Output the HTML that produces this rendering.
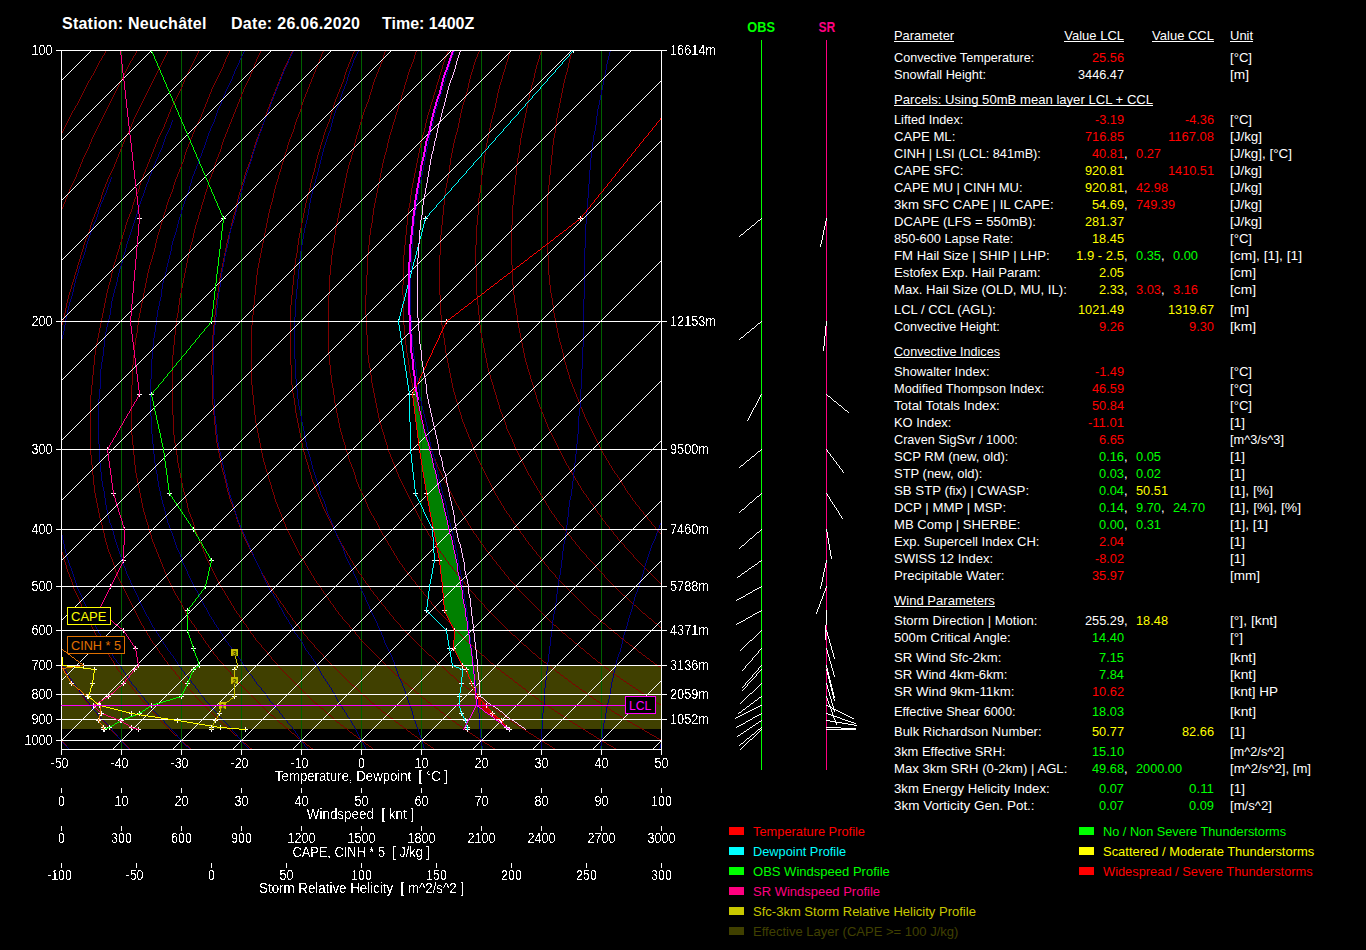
<!DOCTYPE html>
<html lang="en"><head><meta charset="utf-8"><title>Sounding Neuchâtel 26.06.2020 1400Z</title>
<style>
html,body{margin:0;padding:0;background:#000;overflow:hidden}
svg{display:block;font-family:"Liberation Sans",sans-serif;font-size:13px;fill:#fff}
svg text{white-space:pre}
svg text.al{filter:url(#al)}
svg line,svg polyline,svg rect,svg polygon,svg path{shape-rendering:crispEdges}
</style></head><body>
<svg width="1366" height="950" viewBox="0 0 1366 950">
<rect width="1366" height="950" fill="#000"/>
<filter id="al" x="-5%" y="-20%" width="110%" height="140%" color-interpolation-filters="sRGB"><feComponentTransfer><feFuncA type="discrete" tableValues="0 0 0 0 0 0 0 0 0 0 0 1 1 1 1 1 1 1 1 1"/></feComponentTransfer></filter>
<clipPath id="c"><rect x="61" y="50" width="601" height="700"/></clipPath>
<g clip-path="url(#c)">
<rect x="61" y="666" width="600" height="63" fill="#404000"/>
<polygon points="415.3,387.5 413.9,390.5 412.5,393.5 412.3,396.5 412.7,399.5 413.1,402.5 413.6,405.5 414.0,408.5 414.4,411.5 414.8,414.5 415.3,417.5 415.7,420.5 416.1,423.5 416.5,426.5 417.0,429.5 417.4,432.5 417.8,435.5 418.2,438.5 418.7,441.5 419.1,444.5 419.5,447.5 419.9,450.5 420.4,453.5 420.8,456.5 421.3,459.5 421.7,462.5 422.1,465.5 422.6,468.5 423.0,471.5 423.4,474.5 423.9,477.5 424.3,480.5 424.7,483.5 425.2,486.5 425.6,489.5 426.1,492.5 426.6,495.5 427.3,498.5 427.9,501.5 428.6,504.5 429.2,507.5 429.8,510.5 430.5,513.5 431.1,516.5 431.8,519.5 432.4,522.5 433.0,525.5 433.7,528.5 434.3,531.5 434.9,534.5 435.4,537.5 436.0,540.5 436.6,543.5 437.1,546.5 437.7,549.5 438.3,552.5 438.8,555.5 439.4,558.5 439.9,561.5 440.2,564.5 440.5,567.5 440.8,570.5 441.1,573.5 441.4,576.5 441.7,579.5 442.0,582.5 442.3,585.5 442.6,588.5 442.8,591.5 443.1,594.5 443.4,597.5 443.7,600.5 443.9,603.5 444.2,606.5 444.5,609.5 445.7,612.5 447.2,615.5 448.6,618.5 450.1,621.5 451.5,624.5 453.0,627.5 454.4,630.5 454.3,633.5 454.1,636.5 454.0,639.5 453.9,642.5 453.7,645.5 453.6,648.5 455.1,651.5 456.6,654.5 458.1,657.5 459.6,660.5 461.1,663.5 463.3,666.5 466.8,669.5 467.8,672.5 468.8,675.5 469.8,678.5 470.8,681.5 471.9,684.5 473.3,687.5 474.2,689.5 475.2,689.5 475.1,687.5 474.8,684.5 474.6,681.5 474.3,678.5 474.1,675.5 473.8,672.5 473.6,669.5 473.3,666.5 473.0,663.5 472.6,660.5 472.2,657.5 471.7,654.5 471.3,651.5 470.9,648.5 470.4,645.5 470.0,642.5 469.6,639.5 469.1,636.5 468.6,633.5 468.2,630.5 467.7,627.5 467.3,624.5 466.8,621.5 466.4,618.5 465.9,615.5 465.4,612.5 465.0,609.5 464.5,606.5 464.0,603.5 463.4,600.5 462.9,597.5 462.4,594.5 461.9,591.5 461.3,588.5 460.8,585.5 460.2,582.5 459.7,579.5 459.1,576.5 458.6,573.5 458.0,570.5 457.4,567.5 456.8,564.5 456.2,561.5 455.6,558.5 455.0,555.5 454.3,552.5 453.7,549.5 453.0,546.5 452.4,543.5 451.7,540.5 451.0,537.5 450.4,534.5 449.7,531.5 449.0,528.5 448.2,525.5 447.5,522.5 446.8,519.5 446.1,516.5 445.3,513.5 444.6,510.5 443.8,507.5 443.1,504.5 442.3,501.5 441.6,498.5 440.8,495.5 440.0,492.5 439.3,489.5 438.6,486.5 437.9,483.5 437.1,480.5 436.4,477.5 435.7,474.5 435.0,471.5 434.2,468.5 433.5,465.5 432.8,462.5 432.1,459.5 431.4,456.5 430.7,453.5 430.0,450.5 429.2,447.5 428.3,444.5 427.4,441.5 426.6,438.5 425.7,435.5 424.9,432.5 424.1,429.5 423.2,426.5 422.4,423.5 421.6,420.5 421.0,417.5 420.4,414.5 419.8,411.5 419.2,408.5 418.6,405.5 418.1,402.5 417.5,399.5 417.0,396.5 416.5,393.5 415.9,390.5 415.5,387.5" fill="#008000"/>
<polygon points="475.4,692.5 475.6,694.5 475.8,696.5 476.0,698.5 476.3,700.5 476.5,702.5 476.7,704.5 478.1,706.5 480.6,708.5 483.2,710.5 485.9,712.5 488.5,714.5 491.2,716.5 493.9,718.5 496.6,720.5 499.3,722.5 502.1,724.5 504.9,726.5 509.2,729.5 509.2,729.5 509.6,729.5 509.6,729.5 505.3,726.5 503.9,724.5 502.5,722.5 501.1,720.5 498.7,718.5 496.2,716.5 493.8,714.5 491.8,712.5 490.2,710.5 488.5,708.5 486.9,706.5 485.1,704.5 483.2,702.5 481.2,700.5 479.3,698.5 477.3,696.5 476.4,694.5 475.5,692.5" fill="#c00000"/>
<rect x="121" y="50" width="1" height="700" fill="#006000"/>
<rect x="181" y="50" width="1" height="700" fill="#006000"/>
<rect x="241" y="50" width="1" height="700" fill="#006000"/>
<rect x="301" y="50" width="1" height="700" fill="#006000"/>
<rect x="361" y="50" width="1" height="700" fill="#006000"/>
<rect x="421" y="50" width="1" height="700" fill="#006000"/>
<rect x="481" y="50" width="1" height="700" fill="#006000"/>
<rect x="541" y="50" width="1" height="700" fill="#006000"/>
<rect x="601" y="50" width="1" height="700" fill="#006000"/>
<path d="M69 749.5h1m-2-1h1m-2-1h1m-1.5-2.5v2m-1.5-2.5h1m-2-1h1m-2-1h1m-2-1h1m-2-1h1m-0.5-607.5v2m1-4v2m1-4v2m1-4v2m1-4v2m1-4v2m1-4v2m1-4v2m1-4v2m1-4v2m1-4v2m1-4v2m0.5-2.5h1m0.5-2.5v2m1-4v2m0.5-2.5h1m0.5-2.5v2m1-4v2m1-4v2m1-4v2m1-4v2m1-4v2m1-4v2m1-4v2m1-4v2m1-4v2m1-4v2m1-4v2m0.5-2.5h1m0.5-2.5v2m1-4v2m0.5-2.5h1m0.5-2.5v2m1-4v2m1-4v2m1-4v2m1-4v2m1-4v2m1-4v2m0.5-2.5h1m0.5-2.5v2m1-4v2m0.5-2.5h1m0.5-2.5v2m1-4v2m0.5-2.5h1" stroke="#800000" fill="none"/>
<path d="M130 749.5h1m-2-1h1m-2-1h1m-2-1h1m-2-1h1m-2-1h1m-2-1h1m-2-1h1m-2-1h1m-2-1h1m-2-1h1m-2-1h1m-2-1h1m-2-1h1m-2-1h1m-2-1h1m-2-1h1m-2-1h1m-2-1h1m-2-1h1m-2-1h1m-2-1h1m-2-1h1m-1.5-2.5v2m-1.5-2.5h1m-2-1h1m-2-1h1m-2-1h1m-2-1h1m-2-1h1m-1.5-2.5v2m-1.5-2.5h1m-2-1h1m-2-1h1m-1.5-2.5v2m-1.5-2.5h1m-2-1h1m-2-1h1m-2-1h1m-2-1h1m-1.5-2.5v2m-1.5-2.5h1m-2-1h1m-2-1h1m-2-1h1m-2-1h1m-1.5-2.5v2m-1.5-2.5h1m-1.5-2.5v2m-1.5-2.5h1m-2-1h1m-1.5-2.5v2m-1.5-2.5h1m-1.5-2.5v2m-1.5-2.5h1m-1.5-2.5v2m-1.5-2.5h1m-2-1h1m-1.5-2.5v2m-1.5-2.5h1m-1.5-2.5v2m-1.5-2.5h1m-1.5-2.5v2m-1.5-2.5h1m-2-1h1m-1.5-2.5v2m-1.5-2.5h1m-1.5-2.5v2m-1-4v2m-1.5-2.5h1m-0.5-456.5v3m1-5v2m1-5v3m1-5v2m1-5v3m1-5v2m1-5v3m1-5v2m1-5v3m1-5v2m1-4v2m1-4v2m1-4v2m1-4v2m1-4v2m1-5v3m1-5v2m1-5v3m1-5v2m1-5v3m1-5v2m1-5v3m1-5v2m1-4v2m1-4v2m1-4v2m1-4v2m1-4v2m1-5v3m1-5v2m1-5v3m1-5v2m1-4v2m1-4v2m1-4v2m1-4v2m1-4v2m1-4v2m1-4v2m1-4v2m1-4v2m1-4v2m1-4v2m1-4v2m1-4v2m1-4v2m1-4v2m1-4v2m1-4v2m1-4v2m1-4v2m1-4v2m1-4v2m1-4v2m1-4v2m1-4v2m1-4v2m1-4v2m1-4v2m1-4v2m1-4v2m1-4v2m1-4v2m1-4v2m1-4v2m1-4v2m1-4v2m1-4v2m1-4v2m1-4v2m0.5-2.5h1m0.5-2.5v2m1-4v2m0.5-2.5h1m0.5-2.5v2m1-4v2m0.5-2.5h1" stroke="#800000" fill="none"/>
<path d="M191 749.5h1m-2-1h1m-2-1h1m-2-1h1m-3-1h2m-3-1h1m-2-1h1m-2-1h1m-2-1h1m-2-1h1m-2-1h1m-2-1h1m-2-1h1m-2-1h1m-3-1h2m-3-1h1m-2-1h1m-2-1h1m-2-1h1m-2-1h1m-2-1h1m-2-1h1m-2-1h1m-2-1h1m-2-1h1m-2-1h1m-2-1h1m-2-1h1m-2-1h1m-2-1h1m-2-1h1m-2-1h1m-2-1h1m-1.5-2.5v2m-1.5-2.5h1m-2-1h1m-2-1h1m-2-1h1m-2-1h1m-2-1h1m-2-1h1m-2-1h1m-1.5-2.5v2m-1.5-2.5h1m-2-1h1m-2-1h1m-2-1h1m-2-1h1m-2-1h1m-1.5-2.5v2m-1.5-2.5h1m-2-1h1m-2-1h1m-1.5-2.5v2m-1.5-2.5h1m-2-1h1m-2-1h1m-1.5-2.5v2m-1.5-2.5h1m-2-1h1m-2-1h1m-1.5-2.5v2m-1.5-2.5h1m-2-1h1m-2-1h1m-1.5-2.5v2m-1.5-2.5h1m-2-1h1m-2-1h1m-1.5-2.5v2m-1.5-2.5h1m-2-1h1m-1.5-2.5v2m-1-4v2m-1.5-2.5h1m-1.5-2.5v2m-1-4v2m-1.5-2.5h1m-1.5-2.5v2m-1.5-2.5h1m-1.5-2.5v2m-1.5-2.5h1m-2-1h1m-1.5-2.5v2m-1.5-2.5h1m-1.5-2.5v2m-1-4v2m-1.5-2.5h1m-1.5-2.5v2m-1-4v2m-1.5-2.5h1m-1.5-2.5v2m-1-4v2m-1.5-2.5h1m-1.5-2.5v2m-1-4v2m-1-4v2m-1-4v2m-1-4v2m-1-4v2m-1-4v2m-1-4v2m-1-4v2m-1-4v2m-1-4v2m-1-4v2m-1-4v2m-1-4v2m-1-5v3m-1-5v2m-1-5v3m-1-5v2m-1-4v2m-1-4v2m-1-4v2m-1-4v2m-1-6v4m-1-7v3m-1-6v3m-1-5v2m-1-5v3m-1-5v2m-1-5v3m-1-7v4m-1-7v3m-1-6v3m-1-7v4m-1-7v3m-1-7v4m0-227v4m1-7v3m1-7v4m1-9v5m1-10v5m1-10v5m1-9v4m1-8v4m1-7v3m1-6v3m1-7v4m1-7v3m1-6v3m1-7v4m1-7v3m1-6v3m1-7v4m1-7v3m1-6v3m1-7v4m1-7v3m1-6v3m1-7v4m1-7v3m1-6v3m1-5v2m1-5v3m1-5v2m1-5v3m1-7v4m1-7v3m1-6v3m1-5v2m1-5v3m1-5v2m1-5v3m1-5v2m1-5v3m1-5v2m1-5v3m1-7v4m1-7v3m1-6v3m1-5v2m1-5v3m1-5v2m1-5v3m1-5v2m1-4v2m1-4v2m1-4v2m1-4v2m1-4v2m1-5v3m1-5v2m1-5v3m1-5v2m1-5v3m1-5v2m1-5v3m1-5v2m1-5v3m1-5v2m1-5v3m1-5v2m1-4v2m1-4v2m1-4v2m1-4v2m1-4v2m1-5v3m1-5v2m1-5v3m1-5v2m1-4v2m1-4v2m1-4v2m1-4v2m1-4v2m1-4v2m1-4v2m1-4v2m1-4v2m1-4v2m1-4v2m1-4v2m1-4v2m1-4v2m1-4v2m1-4v2m1-4v2m1-4v2m1-4v2m1-4v2m1-4v2m1-4v2m1-4v2m1-4v2m1-4v2m1-4v2m1-4v2m1-4v2m1-4v2m1-4v2m1-4v2m1-4v2m1-4v2m0.5-2.5h1" stroke="#800000" fill="none"/>
<path d="M252 749.5h1m-3-1h2m-3-1h1m-2-1h1m-2-1h1m-2-1h1m-3-1h2m-3-1h1m-2-1h1m-2-1h1m-2-1h1m-2-1h1m-2-1h1m-2-1h1m-3-1h2m-3-1h1m-2-1h1m-2-1h1m-2-1h1m-2-1h1m-2-1h1m-2-1h1m-2-1h1m-2-1h1m-3-1h2m-3-1h1m-2-1h1m-2-1h1m-2-1h1m-2-1h1m-2-1h1m-2-1h1m-2-1h1m-2-1h1m-2-1h1m-2-1h1m-2-1h1m-2-1h1m-2-1h1m-2-1h1m-2-1h1m-2-1h1m-2-1h1m-2-1h1m-2-1h1m-2-1h1m-2-1h1m-2-1h1m-2-1h1m-2-1h1m-2-1h1m-2-1h1m-2-1h1m-1.5-2.5v2m-1.5-2.5h1m-2-1h1m-2-1h1m-2-1h1m-2-1h1m-2-1h1m-2-1h1m-2-1h1m-1.5-2.5v2m-1.5-2.5h1m-2-1h1m-2-1h1m-2-1h1m-2-1h1m-2-1h1m-1.5-2.5v2m-1.5-2.5h1m-2-1h1m-2-1h1m-1.5-2.5v2m-1.5-2.5h1m-2-1h1m-2-1h1m-1.5-2.5v2m-1.5-2.5h1m-2-1h1m-2-1h1m-1.5-2.5v2m-1.5-2.5h1m-2-1h1m-1.5-2.5v2m-1.5-2.5h1m-1.5-2.5v2m-1.5-2.5h1m-2-1h1m-1.5-2.5v2m-1.5-2.5h1m-1.5-2.5v2m-1.5-2.5h1m-1.5-2.5v2m-1.5-2.5h1m-2-1h1m-1.5-2.5v2m-1.5-2.5h1m-1.5-2.5v2m-1-4v2m-1.5-2.5h1m-1.5-2.5v2m-1-4v2m-1.5-2.5h1m-1.5-2.5v2m-1-4v2m-1.5-2.5h1m-1.5-2.5v2m-1-4v2m-1-4v2m-1-4v2m-1-4v2m-1-4v2m-1-4v2m-1-4v2m-1-4v2m-1-4v2m-1-4v2m-1-4v2m-1-4v2m-1-4v2m-1-4v2m-1-4v2m-1-4v2m-1-4v2m-1-4v2m-1-4v2m-1-4v2m-1-4v2m-1-4v2m-1-4v2m-1-5v3m-1-5v2m-1-5v3m-1-7v4m-1-7v3m-1-6v3m-1-5v2m-1-5v3m-1-5v2m-1-5v3m-1-7v4m-1-7v3m-1-7v4m-1-9v5m-1-9v4m-1-8v4m-1-7v3m-1-7v4m-1-9v5m-1-10v5m-1-10v5m-1-10v5m-1-10v5m-1-13v8m-1-18v10m-1-20v10m-1-20v10m-1-70v60m1-70v10m1-20v10m1-20v10m1-20v10m1-17v7m1-12v5m1-10v5m1-10v5m1-10v5m1-10v5m1-10v5m1-10v5m1-10v5m1-10v5m1-10v5m1-10v5m1-9v4m1-8v4m1-7v3m1-7v4m1-9v5m1-9v4m1-8v4m1-7v3m1-6v3m1-7v4m1-7v3m1-6v3m1-7v4m1-7v3m1-6v3m1-7v4m1-7v3m1-6v3m1-7v4m1-7v3m1-6v3m1-5v2m1-5v3m1-5v2m1-5v3m1-7v4m1-7v3m1-6v3m1-5v2m1-5v3m1-5v2m1-5v3m1-7v4m1-7v3m1-6v3m1-5v2m1-5v3m1-5v2m1-5v3m1-5v2m1-5v3m1-5v2m1-5v3m1-5v2m1-5v3m1-5v2m1-5v3m1-5v2m1-5v3m1-5v2m1-5v3m1-5v2m1-4v2m1-4v2m1-4v2m1-4v2m1-4v2m1-5v3m1-5v2m1-5v3m1-5v2m1-5v3m1-5v2m1-5v3m1-5v2m1-4v2m1-4v2m1-4v2m1-4v2m1-4v2m1-4v2m1-4v2m1-4v2m1-4v2m1-4v2m1-5v3m1-5v2m1-5v3m1-5v2m1-4v2m1-4v2m1-4v2m1-4v2m1-4v2m1-4v2m1-4v2m1-4v2m1-4v2m1-4v2m1-4v2m1-4v2m1-4v2m0.5-2.5h1" stroke="#800000" fill="none"/>
<path d="M313 749.5h1m-3-1h2m-3-1h1m-2-1h1m-3-1h2m-3-1h1m-2-1h1m-3-1h2m-3-1h1m-2-1h1m-2-1h1m-3-1h2m-3-1h1m-2-1h1m-2-1h1m-2-1h1m-3-1h2m-3-1h1m-2-1h1m-2-1h1m-2-1h1m-3-1h2m-3-1h1m-2-1h1m-2-1h1m-2-1h1m-3-1h2m-3-1h1m-2-1h1m-2-1h1m-2-1h1m-2-1h1m-2-1h1m-2-1h1m-3-1h2m-3-1h1m-2-1h1m-2-1h1m-2-1h1m-2-1h1m-2-1h1m-2-1h1m-2-1h1m-2-1h1m-2-1h1m-2-1h1m-2-1h1m-2-1h1m-2-1h1m-2-1h1m-2-1h1m-2-1h1m-2-1h1m-2-1h1m-2-1h1m-2-1h1m-2-1h1m-2-1h1m-2-1h1m-2-1h1m-2-1h1m-2-1h1m-2-1h1m-2-1h1m-2-1h1m-2-1h1m-2-1h1m-2-1h1m-2-1h1m-2-1h1m-2-1h1m-1.5-2.5v2m-1.5-2.5h1m-2-1h1m-2-1h1m-1.5-2.5v2m-1.5-2.5h1m-2-1h1m-2-1h1m-2-1h1m-2-1h1m-1.5-2.5v2m-1.5-2.5h1m-2-1h1m-2-1h1m-2-1h1m-2-1h1m-2-1h1m-1.5-2.5v2m-1.5-2.5h1m-2-1h1m-2-1h1m-1.5-2.5v2m-1.5-2.5h1m-2-1h1m-1.5-2.5v2m-1.5-2.5h1m-1.5-2.5v2m-1.5-2.5h1m-2-1h1m-1.5-2.5v2m-1.5-2.5h1m-1.5-2.5v2m-1.5-2.5h1m-1.5-2.5v2m-1.5-2.5h1m-2-1h1m-1.5-2.5v2m-1.5-2.5h1m-1.5-2.5v2m-1.5-2.5h1m-1.5-2.5v2m-1.5-2.5h1m-2-1h1m-1.5-2.5v2m-1.5-2.5h1m-1.5-2.5v2m-1-4v2m-1.5-2.5h1m-1.5-2.5v2m-1-4v2m-1-4v2m-1-4v2m-1-4v2m-1-4v2m-1-4v2m-1.5-2.5h1m-1.5-2.5v2m-1-4v2m-1.5-2.5h1m-1.5-2.5v2m-1-4v2m-1-4v2m-1-4v2m-1-4v2m-1-4v2m-1-4v2m-1-4v2m-1-4v2m-1-5v3m-1-5v2m-1-5v3m-1-5v2m-1-5v3m-1-5v2m-1-5v3m-1-5v2m-1-5v3m-1-5v2m-1-5v3m-1-5v2m-1-5v3m-1-5v2m-1-5v3m-1-7v4m-1-7v3m-1-6v3m-1-7v4m-1-7v3m-1-6v3m-1-7v4m-1-7v3m-1-7v4m-1-9v5m-1-10v5m-1-10v5m-1-10v5m-1-10v5m-1-10v5m-1-10v5m-1-13v8m-1-18v10m-1-20v10m-1-20v10m-1-60v50m1-70v20m1-30v10m1-20v10m1-17v7m1-12v5m1-13v8m1-15v7m1-12v5m1-10v5m1-10v5m1-10v5m1-10v5m1-10v5m1-10v5m1-10v5m1-10v5m1-9v4m1-8v4m1-7v3m1-6v3m1-7v4m1-7v3m1-7v4m1-9v5m1-9v4m1-8v4m1-7v3m1-6v3m1-7v4m1-7v3m1-6v3m1-7v4m1-7v3m1-6v3m1-7v4m1-7v3m1-6v3m1-5v2m1-5v3m1-5v2m1-5v3m1-7v4m1-7v3m1-6v3m1-5v2m1-5v3m1-5v2m1-5v3m1-5v2m1-5v3m1-5v2m1-5v3m1-7v4m1-7v3m1-6v3m1-5v2m1-5v3m1-5v2m1-5v3m1-5v2m1-5v3m1-5v2m1-5v3m1-5v2m1-4v2m1-4v2m1-4v2m1-4v2m1-4v2m1-5v3m1-5v2m1-5v3m1-5v2m1-5v3m1-5v2m1-5v3m1-5v2m1-5v3m1-5v2m1-5v3m1-5v2m1-4v2m1-4v2m1-4v2m1-4v2m1-4v2m1-4v2m1-4v2m1-4v2m1-4v2m1-4v2m1-5v3m1-5v2m1-5v3m1-5v2m1-4v2m1-4v2m1-4v2m0.5-2.5h1" stroke="#800000" fill="none"/>
<path d="M373 749.5h2m-3-1h1m-2-1h1m-3-1h2m-3-1h1m-3-1h2m-3-1h1m-2-1h1m-3-1h2m-3-1h1m-2-1h1m-3-1h2m-3-1h1m-2-1h1m-3-1h2m-3-1h1m-2-1h1m-3-1h2m-3-1h1m-2-1h1m-2-1h1m-3-1h2m-3-1h1m-2-1h1m-3-1h2m-3-1h1m-2-1h1m-3-1h2m-3-1h1m-2-1h1m-2-1h1m-2-1h1m-2-1h1m-2-1h1m-3-1h2m-3-1h1m-2-1h1m-2-1h1m-2-1h1m-2-1h1m-2-1h1m-3-1h2m-3-1h1m-2-1h1m-2-1h1m-2-1h1m-3-1h2m-3-1h1m-2-1h1m-2-1h1m-2-1h1m-2-1h1m-2-1h1m-2-1h1m-2-1h1m-2-1h1m-2-1h1m-2-1h1m-2-1h1m-2-1h1m-2-1h1m-2-1h1m-2-1h1m-2-1h1m-2-1h1m-2-1h1m-2-1h1m-2-1h1m-2-1h1m-2-1h1m-2-1h1m-2-1h1m-2-1h1m-2-1h1m-2-1h1m-2-1h1m-2-1h1m-2-1h1m-2-1h1m-2-1h1m-2-1h1m-2-1h1m-2-1h1m-1.5-2.5v2m-1.5-2.5h1m-2-1h1m-2-1h1m-2-1h1m-2-1h1m-2-1h1m-1.5-2.5v2m-1.5-2.5h1m-2-1h1m-2-1h1m-1.5-2.5v2m-1.5-2.5h1m-2-1h1m-2-1h1m-2-1h1m-2-1h1m-1.5-2.5v2m-1.5-2.5h1m-2-1h1m-2-1h1m-2-1h1m-2-1h1m-1.5-2.5v2m-1.5-2.5h1m-1.5-2.5v2m-1.5-2.5h1m-2-1h1m-1.5-2.5v2m-1.5-2.5h1m-1.5-2.5v2m-1.5-2.5h1m-1.5-2.5v2m-1.5-2.5h1m-2-1h1m-1.5-2.5v2m-1.5-2.5h1m-1.5-2.5v2m-1.5-2.5h1m-1.5-2.5v2m-1.5-2.5h1m-2-1h1m-1.5-2.5v2m-1.5-2.5h1m-1.5-2.5v2m-1-4v2m-1.5-2.5h1m-1.5-2.5v2m-1-4v2m-1.5-2.5h1m-1.5-2.5v2m-1-4v2m-1.5-2.5h1m-1.5-2.5v2m-1-4v2m-1.5-2.5h1m-1.5-2.5v2m-1-4v2m-1.5-2.5h1m-1.5-2.5v2m-1-4v2m-1-4v2m-1-4v2m-1-4v2m-1-4v2m-1-4v2m-1-4v2m-1-4v2m-1-4v2m-1-4v2m-1-4v2m-1-4v2m-1-4v2m-1-5v3m-1-5v2m-1-5v3m-1-5v2m-1-5v3m-1-5v2m-1-5v3m-1-5v2m-1-5v3m-1-5v2m-1-5v3m-1-7v4m-1-7v3m-1-6v3m-1-5v2m-1-5v3m-1-5v2m-1-6v4m-1-9v5m-1-9v4m-1-8v4m-1-7v3m-1-7v4m-1-9v5m-1-10v5m-1-10v5m-1-10v5m-1-10v5m-1-13v8m-1-15v7m-1-12v5m-1-13v8m-1-28v20m-1-80v60m1-70v10m1-20v10m1-20v10m1-17v7m1-12v5m1-13v8m1-15v7m1-12v5m1-10v5m1-10v5m1-10v5m1-10v5m1-10v5m1-10v5m1-10v5m1-10v5m1-9v4m1-8v4m1-7v3m1-7v4m1-9v5m1-9v4m1-8v4m1-7v3m1-6v3m1-7v4m1-7v3m1-6v3m1-7v4m1-7v3m1-6v3m1-7v4m1-7v3m1-6v3m1-7v4m1-7v3m1-6v3m1-5v2m1-5v3m1-5v2m1-5v3m1-7v4m1-7v3m1-6v3m1-5v2m1-5v3m1-5v2m1-5v3m1-7v4m1-7v3m1-6v3m1-5v2m1-5v3m1-5v2m1-5v3m1-5v2m1-5v3m1-5v2m1-5v3m1-5v2m1-5v3m1-5v2m1-5v3m1-5v2m1-5v3m1-5v2m1-5v3m1-5v2m1-5v3m1-5v2m1-5v3m1-5v2m1-4v2m1-4v2m1-4v2m1-4v2m1-4v2m1-5v3m1-5v2m1-5v3m1-5v2m1-5v3m1-5v2m1-5v3m1-5v2m1-4v2m1-4v2m1-4v2m0.5-2.5h1" stroke="#800000" fill="none"/>
<path d="M434 749.5h2m-3-1h1m-3-1h2m-3-1h1m-3-1h2m-3-1h1m-3-1h2m-3-1h1m-3-1h2m-3-1h1m-3-1h2m-3-1h1m-2-1h1m-3-1h2m-3-1h1m-3-1h2m-3-1h1m-2-1h1m-3-1h2m-3-1h1m-2-1h1m-3-1h2m-3-1h1m-2-1h1m-3-1h2m-3-1h1m-2-1h1m-3-1h2m-3-1h1m-2-1h1m-2-1h1m-3-1h2m-3-1h1m-2-1h1m-3-1h2m-3-1h1m-2-1h1m-3-1h2m-3-1h1m-2-1h1m-2-1h1m-3-1h2m-3-1h1m-2-1h1m-2-1h1m-2-1h1m-3-1h2m-3-1h1m-2-1h1m-2-1h1m-2-1h1m-2-1h1m-2-1h1m-2-1h1m-3-1h2m-3-1h1m-2-1h1m-2-1h1m-2-1h1m-2-1h1m-2-1h1m-2-1h1m-2-1h1m-2-1h1m-3-1h2m-3-1h1m-2-1h1m-2-1h1m-2-1h1m-2-1h1m-2-1h1m-2-1h1m-2-1h1m-2-1h1m-2-1h1m-2-1h1m-2-1h1m-2-1h1m-2-1h1m-2-1h1m-2-1h1m-2-1h1m-2-1h1m-2-1h1m-2-1h1m-2-1h1m-2-1h1m-2-1h1m-2-1h1m-2-1h1m-2-1h1m-2-1h1m-2-1h1m-1.5-2.5v2m-1.5-2.5h1m-2-1h1m-2-1h1m-2-1h1m-2-1h1m-2-1h1m-2-1h1m-2-1h1m-1.5-2.5v2m-1.5-2.5h1m-2-1h1m-2-1h1m-2-1h1m-2-1h1m-2-1h1m-1.5-2.5v2m-1.5-2.5h1m-2-1h1m-2-1h1m-1.5-2.5v2m-1.5-2.5h1m-2-1h1m-2-1h1m-1.5-2.5v2m-1.5-2.5h1m-2-1h1m-2-1h1m-1.5-2.5v2m-1.5-2.5h1m-2-1h1m-1.5-2.5v2m-1.5-2.5h1m-1.5-2.5v2m-1.5-2.5h1m-2-1h1m-1.5-2.5v2m-1.5-2.5h1m-1.5-2.5v2m-1.5-2.5h1m-1.5-2.5v2m-1.5-2.5h1m-2-1h1m-1.5-2.5v2m-1.5-2.5h1m-1.5-2.5v2m-1.5-2.5h1m-1.5-2.5v2m-1.5-2.5h1m-2-1h1m-1.5-2.5v2m-1.5-2.5h1m-1.5-2.5v2m-1-4v2m-1.5-2.5h1m-1.5-2.5v2m-1-4v2m-1.5-2.5h1m-1.5-2.5v2m-1-4v2m-1.5-2.5h1m-1.5-2.5v2m-1-4v2m-1-4v2m-1-4v2m-1-4v2m-1-4v2m-1-4v2m-1-4v2m-1-4v2m-1-4v2m-1-4v2m-1-4v2m-1-4v2m-1-4v2m-1-4v2m-1-4v2m-1-4v2m-1-4v2m-1-4v2m-1-5v3m-1-5v2m-1-5v3m-1-5v2m-1-5v3m-1-5v2m-1-5v3m-1-7v4m-1-7v3m-1-6v3m-1-5v2m-1-5v3m-1-5v2m-1-5v3m-1-7v4m-1-7v3m-1-7v4m-1-9v5m-1-9v4m-1-8v4m-1-7v3m-1-7v4m-1-9v5m-1-10v5m-1-10v5m-1-10v5m-1-10v5m-1-13v8m-1-18v10m-1-20v10m-1-20v10m-1-40v30m-1-40v10m1-40v30m1-40v10m1-20v10m1-20v10m1-17v7m1-12v5m1-13v8m1-15v7m1-12v5m1-10v5m1-10v5m1-10v5m1-10v5m1-10v5m1-10v5m1-9v4m1-8v4m1-7v3m1-7v4m1-9v5m1-9v4m1-8v4m1-7v3m1-7v4m1-9v5m1-9v4m1-8v4m1-7v3m1-6v3m1-7v4m1-7v3m1-6v3m1-7v4m1-7v3m1-6v3m1-5v2m1-5v3m1-5v2m1-5v3m1-7v4m1-7v3m1-6v3m1-7v4m1-7v3m1-6v3m1-5v2m1-5v3m1-5v2m1-5v3m1-5v2m1-5v3m1-5v2m1-5v3m1-7v4m1-7v3m1-6v3m1-5v2m1-5v3m1-5v2m1-5v3m1-5v2m1-5v3m1-5v2m1-5v3m1-5v2m1-5v3m1-5v2m1-5v3m1-5v2m1-5v3m1-5v2m1-5v3m1-5v2m1-4v2m1-4v2m1-4v2m1-4v2m1-4v2m1-5v3m1-5v2m1-4v2" stroke="#800000" fill="none"/>
<path d="M495 749.5h2m-4-1h2m-3-1h1m-3-1h2m-3-1h1m-3-1h2m-4-1h2m-3-1h1m-3-1h2m-3-1h1m-3-1h2m-3-1h1m-3-1h2m-3-1h1m-3-1h2m-3-1h1m-3-1h2m-3-1h1m-3-1h2m-3-1h1m-3-1h2m-3-1h1m-2-1h1m-3-1h2m-3-1h1m-3-1h2m-3-1h1m-2-1h1m-3-1h2m-3-1h1m-2-1h1m-3-1h2m-3-1h1m-2-1h1m-3-1h2m-3-1h1m-2-1h1m-3-1h2m-3-1h1m-2-1h1m-2-1h1m-3-1h2m-3-1h1m-2-1h1m-3-1h2m-3-1h1m-2-1h1m-3-1h2m-3-1h1m-2-1h1m-2-1h1m-3-1h2m-3-1h1m-2-1h1m-2-1h1m-2-1h1m-3-1h2m-3-1h1m-2-1h1m-2-1h1m-2-1h1m-3-1h2m-3-1h1m-2-1h1m-2-1h1m-2-1h1m-3-1h2m-3-1h1m-2-1h1m-2-1h1m-2-1h1m-2-1h1m-2-1h1m-2-1h1m-3-1h2m-3-1h1m-2-1h1m-2-1h1m-2-1h1m-2-1h1m-2-1h1m-2-1h1m-2-1h1m-2-1h1m-2-1h1m-2-1h1m-2-1h1m-2-1h1m-2-1h1m-2-1h1m-2-1h1m-2-1h1m-2-1h1m-2-1h1m-2-1h1m-2-1h1m-2-1h1m-2-1h1m-2-1h1m-2-1h1m-2-1h1m-2-1h1m-2-1h1m-2-1h1m-2-1h1m-2-1h1m-2-1h1m-2-1h1m-2-1h1m-2-1h1m-2-1h1m-1.5-2.5v2m-1.5-2.5h1m-2-1h1m-2-1h1m-1.5-2.5v2m-1.5-2.5h1m-2-1h1m-2-1h1m-2-1h1m-2-1h1m-1.5-2.5v2m-1.5-2.5h1m-2-1h1m-2-1h1m-2-1h1m-2-1h1m-2-1h1m-1.5-2.5v2m-1.5-2.5h1m-2-1h1m-2-1h1m-1.5-2.5v2m-1.5-2.5h1m-2-1h1m-1.5-2.5v2m-1.5-2.5h1m-1.5-2.5v2m-1.5-2.5h1m-2-1h1m-1.5-2.5v2m-1.5-2.5h1m-1.5-2.5v2m-1.5-2.5h1m-1.5-2.5v2m-1.5-2.5h1m-2-1h1m-1.5-2.5v2m-1.5-2.5h1m-1.5-2.5v2m-1.5-2.5h1m-1.5-2.5v2m-1.5-2.5h1m-2-1h1m-1.5-2.5v2m-1.5-2.5h1m-1.5-2.5v2m-1-4v2m-1.5-2.5h1m-1.5-2.5v2m-1-4v2m-1.5-2.5h1m-1.5-2.5v2m-1-4v2m-1.5-2.5h1m-1.5-2.5v2m-1-4v2m-1.5-2.5h1m-1.5-2.5v2m-1-4v2m-1.5-2.5h1m-1.5-2.5v2m-1-4v2m-1-4v2m-1-4v2m-1-4v2m-1-4v2m-1-4v2m-1-4v2m-1-4v2m-1-4v2m-1-4v2m-1-4v2m-1-4v2m-1-4v2m-1-5v3m-1-5v2m-1-5v3m-1-5v2m-1-5v3m-1-5v2m-1-5v3m-1-5v2m-1-5v3m-1-5v2m-1-5v3m-1-7v4m-1-7v3m-1-6v3m-1-7v4m-1-7v3m-1-6v3m-1-7v4m-1-7v3m-1-6v3m-1-7v4m-1-7v3m-1-7v4m-1-9v5m-1-10v5m-1-10v5m-1-10v5m-1-10v5m-1-10v5m-1-10v5m-1-13v8m-1-18v10m-1-20v10m-1-20v10m-1-70v60m1-70v10m1-20v10m1-20v10m1-20v10m1-20v10m1-17v7m1-12v5m1-10v5m1-10v5m1-10v5m1-10v5m1-10v5m1-10v5m1-10v5m1-10v5m1-10v5m1-10v5m1-9v4m1-8v4m1-7v3m1-7v4m1-9v5m1-9v4m1-8v4m1-7v3m1-6v3m1-7v4m1-7v3m1-6v3m1-7v4m1-7v3m1-6v3m1-7v4m1-7v3m1-6v3m1-7v4m1-7v3m1-6v3m1-5v2m1-5v3m1-5v2m1-5v3m1-7v4m1-7v3m1-6v3m1-5v2m1-5v3m1-5v2m1-5v3m1-7v4m1-7v3m1-6v3m1-5v2m1-5v3m1-5v2m1-5v3m1-5v2m1-5v3m1-5v2m1-5v3m1-5v2m1-5v3m1-5v2m1-5v3m1-5v2m1-5v3m1-5v2m1-5v3m1-5v2m1-5v3m1-5v2m1-4v2" stroke="#800000" fill="none"/>
<path d="M555 749.5h2m-4-1h2m-3-1h1m-3-1h2m-3-1h1m-3-1h2m-4-1h2m-3-1h1m-3-1h2m-3-1h1m-3-1h2m-4-1h2m-3-1h1m-3-1h2m-3-1h1m-3-1h2m-4-1h2m-3-1h1m-3-1h2m-3-1h1m-3-1h2m-3-1h1m-3-1h2m-3-1h1m-3-1h2m-3-1h1m-3-1h2m-3-1h1m-3-1h2m-3-1h1m-3-1h2m-3-1h1m-2-1h1m-3-1h2m-3-1h1m-3-1h2m-3-1h1m-2-1h1m-3-1h2m-3-1h1m-2-1h1m-3-1h2m-3-1h1m-2-1h1m-3-1h2m-3-1h1m-2-1h1m-3-1h2m-3-1h1m-2-1h1m-2-1h1m-3-1h2m-3-1h1m-2-1h1m-3-1h2m-3-1h1m-2-1h1m-3-1h2m-3-1h1m-2-1h1m-2-1h1m-3-1h2m-3-1h1m-2-1h1m-3-1h2m-3-1h1m-2-1h1m-3-1h2m-3-1h1m-2-1h1m-2-1h1m-2-1h1m-2-1h1m-2-1h1m-3-1h2m-3-1h1m-2-1h1m-2-1h1m-2-1h1m-2-1h1m-2-1h1m-2-1h1m-2-1h1m-2-1h1m-3-1h2m-3-1h1m-2-1h1m-2-1h1m-2-1h1m-2-1h1m-2-1h1m-2-1h1m-2-1h1m-2-1h1m-3-1h2m-3-1h1m-2-1h1m-2-1h1m-2-1h1m-2-1h1m-2-1h1m-2-1h1m-2-1h1m-2-1h1m-2-1h1m-2-1h1m-2-1h1m-2-1h1m-2-1h1m-2-1h1m-2-1h1m-2-1h1m-2-1h1m-2-1h1m-2-1h1m-2-1h1m-2-1h1m-2-1h1m-2-1h1m-2-1h1m-2-1h1m-2-1h1m-2-1h1m-1.5-2.5v2m-1.5-2.5h1m-2-1h1m-2-1h1m-2-1h1m-2-1h1m-2-1h1m-1.5-2.5v2m-1.5-2.5h1m-2-1h1m-2-1h1m-1.5-2.5v2m-1.5-2.5h1m-2-1h1m-2-1h1m-1.5-2.5v2m-1.5-2.5h1m-2-1h1m-2-1h1m-1.5-2.5v2m-1.5-2.5h1m-2-1h1m-2-1h1m-1.5-2.5v2m-1.5-2.5h1m-2-1h1m-2-1h1m-1.5-2.5v2m-1.5-2.5h1m-2-1h1m-1.5-2.5v2m-1.5-2.5h1m-1.5-2.5v2m-1.5-2.5h1m-2-1h1m-1.5-2.5v2m-1.5-2.5h1m-1.5-2.5v2m-1.5-2.5h1m-1.5-2.5v2m-1.5-2.5h1m-2-1h1m-1.5-2.5v2m-1.5-2.5h1m-1.5-2.5v2m-1-4v2m-1.5-2.5h1m-1.5-2.5v2m-1-4v2m-1.5-2.5h1m-1.5-2.5v2m-1-4v2m-1.5-2.5h1m-1.5-2.5v2m-1-4v2m-1.5-2.5h1m-1.5-2.5v2m-1-4v2m-1.5-2.5h1m-1.5-2.5v2m-1-4v2m-1-4v2m-1-4v2m-1-4v2m-1-4v2m-1-4v2m-1-4v2m-1-4v2m-1-4v2m-1-4v2m-1-4v2m-1-4v2m-1-4v2m-1-4v2m-1-4v2m-1-4v2m-1-4v2m-1-4v2m-1-5v3m-1-5v2m-1-5v3m-1-5v2m-1-5v3m-1-5v2m-1-5v3m-1-5v2m-1-5v3m-1-5v2m-1-5v3m-1-7v4m-1-7v3m-1-6v3m-1-7v4m-1-7v3m-1-6v3m-1-7v4m-1-7v3m-1-7v4m-1-9v5m-1-10v5m-1-10v5m-1-10v5m-1-10v5m-1-10v5m-1-10v5m-1-13v8m-1-15v7m-1-12v5m-1-13v8m-1-28v20m-1-80v60m1-70v10m1-20v10m1-20v10m1-20v10m1-17v7m1-12v5m1-13v8m1-15v7m1-12v5m1-10v5m1-10v5m1-10v5m1-10v5m1-10v5m1-10v5m1-9v4m1-8v4m1-7v3m1-7v4m1-9v5m1-9v4m1-8v4m1-7v3m1-7v4m1-9v5m1-9v4m1-8v4m1-7v3m1-6v3m1-7v4m1-7v3m1-6v3m1-7v4m1-7v3m1-6v3m1-5v2m1-5v3m1-5v2m1-5v3m1-7v4m1-7v3m1-6v3m1-7v4m1-7v3m1-6v3m1-5v2m1-5v3m1-5v2m1-5v3m1-5v2m1-5v3m1-5v2m1-5v3m1-7v4m1-7v3m1-6v3m1-5v2m1-5v3m1-5v2m1-5v3m1-5v2m1-5v3m1-5v2m1-4v2" stroke="#800000" fill="none"/>
<path d="M616 749.5h2m-4-1h2m-3-1h1m-3-1h2m-4-1h2m-4-1h2m-3-1h1m-3-1h2m-4-1h2m-3-1h1m-3-1h2m-4-1h2m-3-1h1m-3-1h2m-3-1h1m-3-1h2m-4-1h2m-3-1h1m-3-1h2m-3-1h1m-3-1h2m-4-1h2m-3-1h1m-3-1h2m-3-1h1m-3-1h2m-4-1h2m-3-1h1m-3-1h2m-3-1h1m-3-1h2m-3-1h1m-3-1h2m-3-1h1m-3-1h2m-3-1h1m-3-1h2m-3-1h1m-3-1h2m-3-1h1m-3-1h2m-3-1h1m-3-1h2m-3-1h1m-3-1h2m-3-1h1m-3-1h2m-3-1h1m-3-1h2m-3-1h1m-2-1h1m-3-1h2m-3-1h1m-2-1h1m-3-1h2m-3-1h1m-2-1h1m-3-1h2m-3-1h1m-2-1h1m-2-1h1m-3-1h2m-3-1h1m-2-1h1m-3-1h2m-3-1h1m-2-1h1m-3-1h2m-3-1h1m-2-1h1m-2-1h1m-3-1h2m-3-1h1m-2-1h1m-3-1h2m-3-1h1m-2-1h1m-3-1h2m-3-1h1m-2-1h1m-2-1h1m-3-1h2m-3-1h1m-2-1h1m-2-1h1m-2-1h1m-3-1h2m-3-1h1m-2-1h1m-2-1h1m-2-1h1m-2-1h1m-2-1h1m-2-1h1m-3-1h2m-3-1h1m-2-1h1m-2-1h1m-2-1h1m-2-1h1m-2-1h1m-2-1h1m-2-1h1m-2-1h1m-3-1h2m-3-1h1m-2-1h1m-2-1h1m-2-1h1m-2-1h1m-2-1h1m-2-1h1m-2-1h1m-2-1h1m-2-1h1m-2-1h1m-2-1h1m-2-1h1m-2-1h1m-2-1h1m-2-1h1m-2-1h1m-2-1h1m-1.5-2.5v2m-1.5-2.5h1m-2-1h1m-2-1h1m-2-1h1m-2-1h1m-2-1h1m-2-1h1m-2-1h1m-2-1h1m-2-1h1m-2-1h1m-2-1h1m-2-1h1m-2-1h1m-2-1h1m-2-1h1m-1.5-2.5v2m-1.5-2.5h1m-2-1h1m-2-1h1m-1.5-2.5v2m-1.5-2.5h1m-2-1h1m-2-1h1m-1.5-2.5v2m-1.5-2.5h1m-2-1h1m-2-1h1m-1.5-2.5v2m-1.5-2.5h1m-2-1h1m-2-1h1m-1.5-2.5v2m-1.5-2.5h1m-2-1h1m-2-1h1m-1.5-2.5v2m-1.5-2.5h1m-2-1h1m-2-1h1m-1.5-2.5v2m-1.5-2.5h1m-2-1h1m-2-1h1m-1.5-2.5v2m-1.5-2.5h1m-2-1h1m-1.5-2.5v2m-1.5-2.5h1m-1.5-2.5v2m-1.5-2.5h1m-2-1h1m-1.5-2.5v2m-1.5-2.5h1m-1.5-2.5v2m-1-4v2m-1.5-2.5h1m-1.5-2.5v2m-1-4v2m-1.5-2.5h1m-1.5-2.5v2m-1-4v2m-1.5-2.5h1m-1.5-2.5v2m-1-4v2m-1.5-2.5h1m-1.5-2.5v2m-1-4v2m-1.5-2.5h1m-1.5-2.5v2m-1-4v2m-1-4v2m-1-4v2m-1-4v2m-1-4v2m-1-4v2m-1.5-2.5h1m-1.5-2.5v2m-1-4v2m-1.5-2.5h1m-1.5-2.5v2m-1-4v2m-1-4v2m-1-4v2m-1-5v3m-1-5v2m-1-5v3m-1-5v2m-1-4v2m-1-4v2m-1-4v2m-1-4v2m-1-4v2m-1-5v3m-1-5v2m-1-5v3m-1-7v4m-1-7v3m-1-6v3m-1-5v2m-1-5v3m-1-5v2m-1-5v3m-1-7v4m-1-7v3m-1-6v3m-1-7v4m-1-7v3m-1-6v3m-1-7v4m-1-7v3m-1-7v4m-1-9v5m-1-10v5m-1-10v5m-1-10v5m-1-10v5m-1-13v8m-1-15v7m-1-12v5m-1-13v8m-1-18v10m-1-20v10m-1-70v60m1-80v20m1-30v10m1-20v10m1-17v7m1-12v5m1-13v8m1-15v7m1-12v5m1-10v5m1-10v5m1-10v5m1-10v5m1-10v5m1-10v5m1-10v5m1-10v5m1-10v5m1-10v5m1-9v4m1-8v4m1-7v3m1-6v3m1-7v4m1-7v3m1-7v4m1-9v5m1-9v4m1-8v4m1-7v3m1-6v3m1-7v4m1-7v3m1-6v3m1-7v4m1-7v3m1-6v3m1-5v2m1-5v3m1-5v2m1-5v3m1-7v4m1-7v3m1-6v3m1-7v4m1-7v3m1-6v3m1-5v2m1-5v3m1-5v2m1-5v3m1-5v2m1-5v3m1-5v2m1-5v3m1-7v4m1-7v3m1-5v2" stroke="#800000" fill="none"/>
<path d="M661 740.5h1m-3-1h2m-4-1h2m-3-1h1m-3-1h2m-4-1h2m-4-1h2m-3-1h1m-3-1h2m-4-1h2m-3-1h1m-3-1h2m-4-1h2m-3-1h1m-3-1h2m-4-1h2m-4-1h2m-3-1h1m-3-1h2m-4-1h2m-3-1h1m-3-1h2m-4-1h2m-3-1h1m-3-1h2m-3-1h1m-3-1h2m-4-1h2m-3-1h1m-3-1h2m-3-1h1m-3-1h2m-3-1h1m-3-1h2m-3-1h1m-3-1h2m-3-1h1m-3-1h2m-3-1h1m-3-1h2m-3-1h1m-3-1h2m-3-1h1m-2-1h1m-3-1h2m-3-1h1m-3-1h2m-3-1h1m-2-1h1m-3-1h2m-3-1h1m-3-1h2m-3-1h1m-2-1h1m-3-1h2m-3-1h1m-3-1h2m-3-1h1m-2-1h1m-3-1h2m-3-1h1m-2-1h1m-3-1h2m-3-1h1m-2-1h1m-3-1h2m-3-1h1m-2-1h1m-3-1h2m-3-1h1m-2-1h1m-2-1h1m-3-1h2m-3-1h1m-2-1h1m-3-1h2m-3-1h1m-2-1h1m-3-1h2m-3-1h1m-2-1h1m-2-1h1m-3-1h2m-3-1h1m-2-1h1m-2-1h1m-2-1h1m-3-1h2m-3-1h1m-2-1h1m-2-1h1m-2-1h1m-2-1h1m-2-1h1m-2-1h1m-3-1h2m-3-1h1m-2-1h1m-2-1h1m-2-1h1m-2-1h1m-2-1h1m-2-1h1m-2-1h1m-2-1h1m-3-1h2m-3-1h1m-2-1h1m-2-1h1m-2-1h1m-2-1h1m-2-1h1m-2-1h1m-2-1h1m-2-1h1m-2-1h1m-2-1h1m-2-1h1m-2-1h1m-2-1h1m-2-1h1m-2-1h1m-2-1h1m-2-1h1m-2-1h1m-2-1h1m-2-1h1m-2-1h1m-2-1h1m-2-1h1m-2-1h1m-2-1h1m-2-1h1m-2-1h1m-1.5-2.5v2m-1.5-2.5h1m-2-1h1m-2-1h1m-2-1h1m-2-1h1m-2-1h1m-2-1h1m-2-1h1m-1.5-2.5v2m-1.5-2.5h1m-2-1h1m-2-1h1m-2-1h1m-2-1h1m-2-1h1m-1.5-2.5v2m-1.5-2.5h1m-2-1h1m-2-1h1m-1.5-2.5v2m-1.5-2.5h1m-2-1h1m-2-1h1m-1.5-2.5v2m-1.5-2.5h1m-2-1h1m-2-1h1m-1.5-2.5v2m-1.5-2.5h1m-2-1h1m-2-1h1m-1.5-2.5v2m-1.5-2.5h1m-2-1h1m-2-1h1m-1.5-2.5v2m-1.5-2.5h1m-2-1h1m-1.5-2.5v2m-1.5-2.5h1m-1.5-2.5v2m-1.5-2.5h1m-2-1h1m-1.5-2.5v2m-1.5-2.5h1m-1.5-2.5v2m-1.5-2.5h1m-1.5-2.5v2m-1.5-2.5h1m-2-1h1m-1.5-2.5v2m-1.5-2.5h1m-1.5-2.5v2m-1-4v2m-1.5-2.5h1m-1.5-2.5v2m-1-4v2m-1.5-2.5h1m-1.5-2.5v2m-1-4v2m-1.5-2.5h1m-1.5-2.5v2m-1-4v2m-1-4v2m-1-4v2m-1-4v2m-1-4v2m-1-4v2m-1-4v2m-1-4v2m-1-4v2m-1-4v2m-1-4v2m-1-4v2m-1-4v2m-1-4v2m-1-4v2m-1-4v2m-1-4v2m-1-4v2m-1-4v2m-1-4v2m-1-4v2m-1-4v2m-1-4v2m-1-5v3m-1-5v2m-1-5v3m-1-5v2m-1-5v3m-1-5v2m-1-5v3m-1-5v2m-1-5v3m-1-5v2m-1-5v3m-1-7v4m-1-7v3m-1-6v3m-1-7v4m-1-7v3m-1-6v3m-1-7v4m-1-7v3m-1-7v4m-1-9v5m-1-10v5m-1-10v5m-1-10v5m-1-10v5m-1-10v5m-1-10v5m-1-13v8m-1-15v7m-1-12v5m-1-13v8m-1-28v20m-1-40v20m-1-40v20m1-40v20m1-40v20m1-30v10m1-20v10m1-17v7m1-12v5m1-13v8m1-15v7m1-12v5m1-10v5m1-10v5m1-10v5m1-10v5m1-10v5m1-10v5m1-10v5m1-10v5m1-9v4m1-8v4m1-7v3m1-7v4m1-9v5m1-9v4m1-8v4m1-7v3m1-6v3m1-7v4m1-7v3m1-6v3m1-7v4m1-7v3m1-6v3m1-7v4m1-7v3m1-6v3m1-7v4m1-7v3m1-6v3m1-7v4m1-7v3m1-6v3m1-7v4m1-7v3m1-6v3m1-5v2m1-5v3m1-5v2m1-5v3m1-7v4m1-7v3m1-5v2" stroke="#800000" fill="none"/>
<path d="M661 705.5h1m-3-1h2m-4-1h2m-3-1h1m-3-1h2m-3-1h1m-3-1h2m-3-1h1m-3-1h2m-3-1h1m-3-1h2m-3-1h1m-3-1h2m-3-1h1m-3-1h2m-3-1h1m-3-1h2m-3-1h1m-3-1h2m-3-1h1m-3-1h2m-3-1h1m-3-1h2m-3-1h1m-3-1h2m-3-1h1m-3-1h2m-3-1h1m-2-1h1m-3-1h2m-3-1h1m-3-1h2m-3-1h1m-2-1h1m-3-1h2m-3-1h1m-2-1h1m-3-1h2m-3-1h1m-2-1h1m-3-1h2m-3-1h1m-2-1h1m-3-1h2m-3-1h1m-2-1h1m-2-1h1m-3-1h2m-3-1h1m-2-1h1m-2-1h1m-2-1h1m-3-1h2m-3-1h1m-2-1h1m-2-1h1m-2-1h1m-3-1h2m-3-1h1m-2-1h1m-2-1h1m-2-1h1m-3-1h2m-3-1h1m-2-1h1m-2-1h1m-2-1h1m-3-1h2m-3-1h1m-2-1h1m-2-1h1m-2-1h1m-3-1h2m-3-1h1m-2-1h1m-2-1h1m-2-1h1m-2-1h1m-2-1h1m-2-1h1m-3-1h2m-3-1h1m-2-1h1m-2-1h1m-2-1h1m-2-1h1m-2-1h1m-2-1h1m-2-1h1m-2-1h1m-2-1h1m-2-1h1m-2-1h1m-2-1h1m-2-1h1m-2-1h1m-2-1h1m-2-1h1m-2-1h1m-2-1h1m-2-1h1m-2-1h1m-2-1h1m-2-1h1m-2-1h1m-2-1h1m-2-1h1m-2-1h1m-2-1h1m-2-1h1m-2-1h1m-2-1h1m-2-1h1m-2-1h1m-2-1h1m-2-1h1m-2-1h1m-2-1h1m-2-1h1m-1.5-2.5v2m-1.5-2.5h1m-2-1h1m-2-1h1m-2-1h1m-2-1h1m-2-1h1m-1.5-2.5v2m-1.5-2.5h1m-2-1h1m-2-1h1m-1.5-2.5v2m-1.5-2.5h1m-2-1h1m-2-1h1m-1.5-2.5v2m-1.5-2.5h1m-2-1h1m-2-1h1m-1.5-2.5v2m-1.5-2.5h1m-2-1h1m-2-1h1m-1.5-2.5v2m-1.5-2.5h1m-2-1h1m-2-1h1m-1.5-2.5v2m-1.5-2.5h1m-2-1h1m-1.5-2.5v2m-1.5-2.5h1m-1.5-2.5v2m-1.5-2.5h1m-2-1h1m-1.5-2.5v2m-1.5-2.5h1m-1.5-2.5v2m-1.5-2.5h1m-1.5-2.5v2m-1.5-2.5h1m-2-1h1m-1.5-2.5v2m-1.5-2.5h1m-1.5-2.5v2m-1-4v2m-1.5-2.5h1m-1.5-2.5v2m-1-4v2m-1.5-2.5h1m-1.5-2.5v2m-1-4v2m-1.5-2.5h1m-1.5-2.5v2m-1-4v2m-1.5-2.5h1m-1.5-2.5v2m-1-4v2m-1.5-2.5h1m-1.5-2.5v2m-1-4v2m-1-4v2m-1-4v2m-1-4v2m-1-4v2m-1-4v2m-1-4v2m-1-4v2m-1-4v2m-1-4v2m-1-4v2m-1-4v2m-1-4v2m-1-4v2m-1-4v2m-1-4v2m-1-4v2m-1-4v2m-1-5v3m-1-5v2m-1-5v3m-1-5v2m-1-5v3m-1-5v2m-1-5v3m-1-5v2m-1-5v3m-1-5v2m-1-5v3m-1-7v4m-1-7v3m-1-6v3m-1-7v4m-1-7v3m-1-6v3m-1-7v4m-1-7v3m-1-6v3m-1-7v4m-1-7v3m-1-7v4m-1-9v5m-1-10v5m-1-10v5m-1-10v5m-1-10v5m-1-13v8m-1-15v7m-1-12v5m-1-13v8m-1-18v10m-1-20v10m-1-40v30m-1-40v10m1-40v30m1-40v10m1-20v10m1-20v10m1-20v10m1-17v7m1-12v5m1-13v8m1-15v7m1-12v5m1-10v5m1-10v5m1-10v5m1-10v5m1-10v5m1-10v5m1-10v5m1-10v5m1-9v4m1-8v4m1-7v3m1-7v4m1-9v5m1-9v4m1-8v4m1-7v3m1-6v3m1-7v4m1-7v3m1-6v3m1-7v4m1-7v3m1-6v3m1-7v4m1-7v3m1-6v3m1-7v4m1-7v3m1-6v3m1-7v4m1-7v3m1-6v3m1-5v2m1-5v3m1-5v2m1-4v2" stroke="#800000" fill="none"/>
<path d="M661 668.5h1m-2-1h1m-3-1h2m-3-1h1m-3-1h2m-3-1h1m-2-1h1m-3-1h2m-3-1h1m-2-1h1m-3-1h2m-3-1h1m-2-1h1m-3-1h2m-3-1h1m-2-1h1m-3-1h2m-3-1h1m-2-1h1m-2-1h1m-3-1h2m-3-1h1m-2-1h1m-3-1h2m-3-1h1m-2-1h1m-3-1h2m-3-1h1m-2-1h1m-2-1h1m-3-1h2m-3-1h1m-2-1h1m-2-1h1m-2-1h1m-3-1h2m-3-1h1m-2-1h1m-2-1h1m-2-1h1m-3-1h2m-3-1h1m-2-1h1m-2-1h1m-2-1h1m-3-1h2m-3-1h1m-2-1h1m-2-1h1m-2-1h1m-2-1h1m-2-1h1m-2-1h1m-3-1h2m-3-1h1m-2-1h1m-2-1h1m-2-1h1m-2-1h1m-2-1h1m-2-1h1m-2-1h1m-2-1h1m-2-1h1m-2-1h1m-2-1h1m-2-1h1m-2-1h1m-2-1h1m-2-1h1m-2-1h1m-2-1h1m-2-1h1m-2-1h1m-2-1h1m-2-1h1m-2-1h1m-2-1h1m-2-1h1m-2-1h1m-2-1h1m-2-1h1m-2-1h1m-2-1h1m-2-1h1m-2-1h1m-2-1h1m-2-1h1m-2-1h1m-2-1h1m-2-1h1m-2-1h1m-1.5-2.5v2m-1.5-2.5h1m-2-1h1m-2-1h1m-2-1h1m-2-1h1m-2-1h1m-1.5-2.5v2m-1.5-2.5h1m-2-1h1m-2-1h1m-1.5-2.5v2m-1.5-2.5h1m-2-1h1m-2-1h1m-1.5-2.5v2m-1.5-2.5h1m-2-1h1m-2-1h1m-1.5-2.5v2m-1.5-2.5h1m-2-1h1m-2-1h1m-1.5-2.5v2m-1.5-2.5h1m-2-1h1m-2-1h1m-1.5-2.5v2m-1.5-2.5h1m-2-1h1m-1.5-2.5v2m-1.5-2.5h1m-1.5-2.5v2m-1.5-2.5h1m-2-1h1m-1.5-2.5v2m-1.5-2.5h1m-1.5-2.5v2m-1.5-2.5h1m-1.5-2.5v2m-1.5-2.5h1m-2-1h1m-1.5-2.5v2m-1.5-2.5h1m-1.5-2.5v2m-1.5-2.5h1m-1.5-2.5v2m-1.5-2.5h1m-2-1h1m-1.5-2.5v2m-1.5-2.5h1m-1.5-2.5v2m-1-4v2m-1.5-2.5h1m-1.5-2.5v2m-1-4v2m-1.5-2.5h1m-1.5-2.5v2m-1-4v2m-1.5-2.5h1m-1.5-2.5v2m-1-4v2m-1-4v2m-1-4v2m-1-4v2m-1-4v2m-1-4v2m-1-4v2m-1-4v2m-1-4v2m-1-4v2m-1-4v2m-1-4v2m-1-4v2m-1-4v2m-1-4v2m-1-4v2m-1-4v2m-1-4v2m-1-5v3m-1-5v2m-1-5v3m-1-5v2m-1-5v3m-1-5v2m-1-5v3m-1-5v2m-1-5v3m-1-5v2m-1-5v3m-1-5v2m-1-5v3m-1-5v2m-1-5v3m-1-7v4m-1-7v3m-1-6v3m-1-7v4m-1-7v3m-1-6v3m-1-7v4m-1-7v3m-1-7v4m-1-9v5m-1-10v5m-1-10v5m-1-10v5m-1-10v5m-1-10v5m-1-10v5m-1-13v8m-1-15v7m-1-12v5m-1-13v8m-1-18v10m-1-30v20m-1-60v40m1-60v20m1-30v10m1-20v10m1-20v10m1-20v10m1-17v7m1-12v5m1-10v5m1-10v5m1-13v8m1-15v7m1-12v5m1-10v5m1-10v5m1-9v4m1-8v4m1-7v3m1-7v4m1-9v5m1-10v5m1-10v5m1-9v4m1-8v4m1-7v3m1-6v3m1-7v4m1-7v3m1-7v4m1-9v5m1-9v4m1-8v4m1-7v3m1-6v3m1-7v4m1-7v3m1-6v3m1-5v2m1-5v3m1-5v2m1-4v2" stroke="#800000" fill="none"/>
<path d="M661 628.5h1m-2-1h1m-2-1h1m-2-1h1m-2-1h1m-3-1h2m-3-1h1m-2-1h1m-2-1h1m-2-1h1m-3-1h2m-3-1h1m-2-1h1m-2-1h1m-2-1h1m-3-1h2m-3-1h1m-2-1h1m-2-1h1m-2-1h1m-2-1h1m-2-1h1m-2-1h1m-3-1h2m-3-1h1m-2-1h1m-2-1h1m-2-1h1m-2-1h1m-2-1h1m-2-1h1m-2-1h1m-2-1h1m-3-1h2m-3-1h1m-2-1h1m-2-1h1m-2-1h1m-2-1h1m-2-1h1m-2-1h1m-2-1h1m-2-1h1m-2-1h1m-2-1h1m-2-1h1m-2-1h1m-2-1h1m-2-1h1m-2-1h1m-2-1h1m-2-1h1m-1.5-2.5v2m-1.5-2.5h1m-2-1h1m-2-1h1m-2-1h1m-2-1h1m-2-1h1m-2-1h1m-2-1h1m-1.5-2.5v2m-1.5-2.5h1m-2-1h1m-2-1h1m-2-1h1m-2-1h1m-2-1h1m-2-1h1m-2-1h1m-1.5-2.5v2m-1.5-2.5h1m-2-1h1m-2-1h1m-2-1h1m-2-1h1m-2-1h1m-1.5-2.5v2m-1.5-2.5h1m-2-1h1m-2-1h1m-1.5-2.5v2m-1.5-2.5h1m-2-1h1m-2-1h1m-1.5-2.5v2m-1.5-2.5h1m-2-1h1m-2-1h1m-1.5-2.5v2m-1.5-2.5h1m-2-1h1m-2-1h1m-1.5-2.5v2m-1.5-2.5h1m-2-1h1m-2-1h1m-1.5-2.5v2m-1.5-2.5h1m-2-1h1m-1.5-2.5v2m-1.5-2.5h1m-1.5-2.5v2m-1.5-2.5h1m-2-1h1m-1.5-2.5v2m-1.5-2.5h1m-1.5-2.5v2m-1-4v2m-1.5-2.5h1m-1.5-2.5v2m-1-4v2m-1.5-2.5h1m-1.5-2.5v2m-1-4v2m-1.5-2.5h1m-1.5-2.5v2m-1-4v2m-1.5-2.5h1m-1.5-2.5v2m-1-4v2m-1.5-2.5h1m-1.5-2.5v2m-1-4v2m-1.5-2.5h1m-1.5-2.5v2m-1-4v2m-1.5-2.5h1m-1.5-2.5v2m-1-4v2m-1-4v2m-1-4v2m-1-4v2m-1-4v2m-1-4v2m-1-4v2m-1-4v2m-1-4v2m-1-4v2m-1-4v2m-1-4v2m-1-4v2m-1-5v3m-1-5v2m-1-5v3m-1-5v2m-1-4v2m-1-4v2m-1-4v2m-1-4v2m-1-6v4m-1-7v3m-1-6v3m-1-5v2m-1-5v3m-1-5v2m-1-5v3m-1-7v4m-1-7v3m-1-6v3m-1-7v4m-1-7v3m-1-6v3m-1-7v4m-1-7v3m-1-6v3m-1-7v4m-1-7v3m-1-7v4m-1-9v5m-1-10v5m-1-10v5m-1-10v5m-1-10v5m-1-10v5m-1-10v5m-1-13v8m-1-18v10m-1-20v10m-1-20v10m-1-40v30m-1-50v20m1-40v20m1-30v10m1-27v17m1-22v5m1-13v8m1-18v10m1-17v7m1-12v5m1-13v8m1-15v7m1-12v5m1-10v5m1-10v5m1-10v5m1-10v5m1-9v4m1-8v4m1-7v3m1-7v4m1-9v5m1-10v5m1-10v5m1-9v4m1-8v4m1-7v3m1-6v3m1-7v4m1-7v3m1-6v3m1-7v4m1-7v3m1-6v3m1-7v4m1-7v3m1-5v2" stroke="#800000" fill="none"/>
<path d="M661 584.5h1m-2-1h1m-2-1h1m-2-1h1m-2-1h1m-2-1h1m-2-1h1m-2-1h1m-2-1h1m-2-1h1m-2-1h1m-2-1h1m-2-1h1m-2-1h1m-2-1h1m-2-1h1m-2-1h1m-2-1h1m-2-1h1m-2-1h1m-2-1h1m-2-1h1m-2-1h1m-2-1h1m-2-1h1m-2-1h1m-2-1h1m-2-1h1m-1.5-2.5v2m-1.5-2.5h1m-2-1h1m-2-1h1m-2-1h1m-2-1h1m-2-1h1m-2-1h1m-2-1h1m-1.5-2.5v2m-1.5-2.5h1m-2-1h1m-2-1h1m-2-1h1m-2-1h1m-2-1h1m-1.5-2.5v2m-1.5-2.5h1m-2-1h1m-2-1h1m-1.5-2.5v2m-1.5-2.5h1m-2-1h1m-2-1h1m-1.5-2.5v2m-1.5-2.5h1m-2-1h1m-2-1h1m-1.5-2.5v2m-1.5-2.5h1m-2-1h1m-1.5-2.5v2m-1.5-2.5h1m-1.5-2.5v2m-1.5-2.5h1m-2-1h1m-1.5-2.5v2m-1.5-2.5h1m-1.5-2.5v2m-1.5-2.5h1m-1.5-2.5v2m-1.5-2.5h1m-2-1h1m-1.5-2.5v2m-1.5-2.5h1m-1.5-2.5v2m-1.5-2.5h1m-1.5-2.5v2m-1.5-2.5h1m-2-1h1m-1.5-2.5v2m-1.5-2.5h1m-1.5-2.5v2m-1-4v2m-1.5-2.5h1m-1.5-2.5v2m-1-4v2m-1.5-2.5h1m-1.5-2.5v2m-1-4v2m-1.5-2.5h1m-1.5-2.5v2m-1-4v2m-1.5-2.5h1m-1.5-2.5v2m-1-4v2m-1.5-2.5h1m-1.5-2.5v2m-1-4v2m-1-4v2m-1-4v2m-1-4v2m-1-4v2m-1-4v2m-1-4v2m-1-4v2m-1-4v2m-1-4v2m-1-4v2m-1-4v2m-1-4v2m-1-4v2m-1-4v2m-1-4v2m-1-4v2m-1-4v2m-1-5v3m-1-5v2m-1-5v3m-1-5v2m-1-5v3m-1-5v2m-1-5v3m-1-5v2m-1-5v3m-1-5v2m-1-5v3m-1-7v4m-1-7v3m-1-6v3m-1-7v4m-1-7v3m-1-6v3m-1-7v4m-1-7v3m-1-6v3m-1-7v4m-1-7v3m-1-7v4m-1-9v5m-1-10v5m-1-10v5m-1-10v5m-1-10v5m-1-10v5m-1-10v5m-1-13v8m-1-15v7m-1-12v5m-1-13v8m-1-18v10m-1-30v20m-1-60v40m1-60v20m1-30v10m1-20v10m1-20v10m1-20v10m1-17v7m1-12v5m1-13v8m1-15v7m1-12v5m1-10v5m1-10v5m1-10v5m1-10v5m1-10v5m1-10v5m1-10v5m1-10v5m1-9v4m1-8v4m1-7v3m1-7v4m1-9v5m1-9v4m1-8v4m1-7v3m1-6v3m1-7v4m1-7v3m1-5v2" stroke="#800000" fill="none"/>
<path d="M661 534.5h1m-2-1h1m-2-1h1m-2-1h1m-2-1h1m-2-1h1m-1.5-2.5v2m-1.5-2.5h1m-2-1h1m-2-1h1m-1.5-2.5v2m-1.5-2.5h1m-2-1h1m-2-1h1m-1.5-2.5v2m-1.5-2.5h1m-2-1h1m-2-1h1m-1.5-2.5v2m-1.5-2.5h1m-2-1h1m-2-1h1m-1.5-2.5v2m-1.5-2.5h1m-2-1h1m-2-1h1m-1.5-2.5v2m-1.5-2.5h1m-2-1h1m-1.5-2.5v2m-1.5-2.5h1m-1.5-2.5v2m-1.5-2.5h1m-2-1h1m-1.5-2.5v2m-1.5-2.5h1m-1.5-2.5v2m-1-4v2m-1.5-2.5h1m-1.5-2.5v2m-1-4v2m-1.5-2.5h1m-1.5-2.5v2m-1.5-2.5h1m-1.5-2.5v2m-1.5-2.5h1m-2-1h1m-1.5-2.5v2m-1.5-2.5h1m-1.5-2.5v2m-1-4v2m-1.5-2.5h1m-1.5-2.5v2m-1-4v2m-1.5-2.5h1m-1.5-2.5v2m-1-4v2m-1.5-2.5h1m-1.5-2.5v2m-1-4v2m-1-4v2m-1-4v2m-1-4v2m-1-4v2m-1-4v2m-1-4v2m-1-4v2m-1-4v2m-1-4v2m-1-4v2m-1-4v2m-1-4v2m-1-4v2m-1-4v2m-1-4v2m-1-4v2m-1-4v2m-1-5v3m-1-5v2m-1-5v3m-1-5v2m-1-5v3m-1-5v2m-1-5v3m-1-5v2m-1-5v3m-1-5v2m-1-5v3m-1-5v2m-1-5v3m-1-5v2m-1-5v3m-1-7v4m-1-7v3m-1-6v3m-1-7v4m-1-7v3m-1-7v4m-1-9v5m-1-9v4m-1-8v4m-1-7v3m-1-7v4m-1-9v5m-1-10v5m-1-10v5m-1-10v5m-1-10v5m-1-13v8m-1-15v7m-1-12v5m-1-13v8m-1-18v10m-1-30v20m-1-80v60m1-70v10m1-20v10m1-20v10m1-20v10m1-20v10m1-17v7m1-12v5m1-13v8m1-15v7m1-12v5m1-10v5m1-10v5m1-10v5m1-10v5m1-10v5m1-10v5m1-9v4m1-8v4m1-7v3m1-7v4m1-9v5m1-9v4m1-8v4m1-7v3m1-5v2" stroke="#800000" fill="none"/>
<path d="M69 749.5h1m-2-1h1m-2-1h1m-2-1h1m-2-1h1m-2-1h1m-2-1h1m-2-1h1m-2-1h1" stroke="#000080" fill="none"/>
<path d="M129 749.5h1m-2-1h1m-2-1h1m-2-1h1m-2-1h1m-2-1h1m-2-1h1m-2-1h1m-2-1h1m-1.5-2.5v2m-1.5-2.5h1m-2-1h1m-1.5-2.5v2m-1.5-2.5h1m-2-1h1m-2-1h1m-2-1h1m-1.5-2.5v2m-1.5-2.5h1m-2-1h1m-2-1h1m-2-1h1m-2-1h1m-2-1h1m-2-1h1m-2-1h1m-2-1h1m-2-1h1m-2-1h1m-2-1h1m-2-1h1m-2-1h1m-1.5-2.5v2m-1.5-2.5h1m-2-1h1m-2-1h1m-2-1h1m-1.5-2.5v2m-1.5-2.5h1m-2-1h1m-1.5-2.5v2m-1.5-2.5h1m-2-1h1m-2-1h1m-1.5-2.5v2m-1.5-2.5h1m-2-1h1m-1.5-2.5v2m-1.5-2.5h1m-2-1h1m-1.5-2.5v2m-1.5-2.5h1m-2-1h1m-1.5-2.5v2m-1.5-2.5h1m-2-1h1m-1.5-2.5v2m-1.5-2.5h1m-1.5-2.5v2m-1.5-2.5h1m-1.5-2.5v2m-1.5-2.5h1m-1.5-2.5v2m-1-4v2m-1-4v2m-1-4v2m-1.5-2.5h1m-1.5-2.5v2m-1-4v2" stroke="#000080" fill="none"/>
<path d="M190 749.5h1m-2-1h1m-2-1h1m-3-1h2m-3-1h1m-2-1h1m-2-1h1m-2-1h1m-2-1h1m-1.5-2.5v2m-1.5-2.5h1m-2-1h1m-1.5-2.5v2m-1.5-2.5h1m-2-1h1m-2-1h1m-2-1h1m-2-1h1m-2-1h1m-2-1h1m-2-1h1m-2-1h1m-2-1h1m-2-1h1m-2-1h1m-1.5-2.5v2m-1.5-2.5h1m-2-1h1m-2-1h1m-2-1h1m-2-1h1m-2-1h1m-2-1h1m-2-1h1m-2-1h1m-2-1h1m-2-1h1m-2-1h1m-1.5-2.5v2m-1.5-2.5h1m-2-1h1m-1.5-2.5v2m-1.5-2.5h1m-2-1h1m-2-1h1m-1.5-2.5v2m-1.5-2.5h1m-2-1h1m-1.5-2.5v2m-1.5-2.5h1m-2-1h1m-2-1h1m-2-1h1m-1.5-2.5v2m-1.5-2.5h1m-2-1h1m-2-1h1m-2-1h1m-1.5-2.5v2m-1.5-2.5h1m-1.5-2.5v2m-1.5-2.5h1m-1.5-2.5v2m-1.5-2.5h1m-1.5-2.5v2m-1.5-2.5h1m-1.5-2.5v2m-1.5-2.5h1m-1.5-2.5v2m-1.5-2.5h1m-1.5-2.5v2m-1.5-2.5h1m-2-1h1m-1.5-2.5v2m-1.5-2.5h1m-2-1h1m-1.5-2.5v2m-1-4v2m-1.5-2.5h1m-1.5-2.5v2m-1.5-2.5h1m-1.5-2.5v2m-1-4v2m-1-4v2m-1-4v2m-1.5-2.5h1m-1.5-2.5v2m-1-4v2m-1.5-2.5h1m-1.5-2.5v2m-1.5-2.5h1m-1.5-2.5v2m-1-4v2m-1-4v2m-1-4v2m-1-4v2m-1-4v2m-1-4v2m-1-4v2m-1-4v2m-1-4v2m-1-4v2m-1-4v2m-1-5v3m-1-5v2m-1-4v2m-1-4v2m-1-5v3m-1-5v2m-1-4v2m-1-4v2m-1-4v2m-1-5v3m-1-6v3m-1-6v3m-1-6v3m-1-6v3m-1-6v3m-1-6v3m-1-5v2m-1-5v3m-1-6v3m-1-6v3m-1-7v4m-1-8v4m-1-9v5m-1-9v4m-1-9v5m-1-9v4m0-196v5m1-9v4m1-8v4m1-10v6m1-12v6m1-10v4m1-9v5m1-9v4m1-8v4m1-7v3m1-6v3m1-7v4m1-9v5m1-9v4m1-8v4m1-7v3m1-6v3m1-7v4m1-7v3m1-6v3m1-6v3m1-5v2m1-5v3m1-6v3m1-7v4m1-8v4m1-7v3m1-6v3m1-6v3m1-6v3m1-6v3m1-5v2m1-5v3m1-5v2m1-4v2m1-5v3m1-6v3m1-7v4m1-7v3m1-6v3m1-5v2m1-4v2m1-5v3m1-5v2m1-4v2m1-5v3m1-6v3m1-6v3m1-5v2m1-5v3m1-5v2" stroke="#000080" fill="none"/>
<path d="M249 749.5h1m-2-1h1m-2-1h1m-2-1h1m-2-1h1m-2-1h1m-2-1h1m-2-1h1m-2-1h1m-1.5-2.5v2m-1.5-2.5h1m-2-1h1m-1.5-2.5v2m-1.5-2.5h1m-2-1h1m-2-1h1m-2-1h1m-1.5-2.5v2m-1.5-2.5h1m-2-1h1m-2-1h1m-2-1h1m-2-1h1m-2-1h1m-2-1h1m-2-1h1m-2-1h1m-2-1h1m-2-1h1m-2-1h1m-2-1h1m-2-1h1m-1.5-2.5v2m-1.5-2.5h1m-2-1h1m-2-1h1m-2-1h1m-2-1h1m-2-1h1m-1.5-2.5v2m-1.5-2.5h1m-2-1h1m-2-1h1m-2-1h1m-2-1h1m-1.5-2.5v2m-1.5-2.5h1m-2-1h1m-1.5-2.5v2m-1.5-2.5h1m-2-1h1m-1.5-2.5v2m-1.5-2.5h1m-2-1h1m-1.5-2.5v2m-1.5-2.5h1m-2-1h1m-2-1h1m-1.5-2.5v2m-1.5-2.5h1m-2-1h1m-1.5-2.5v2m-1.5-2.5h1m-2-1h1m-2-1h1m-1.5-2.5v2m-1.5-2.5h1m-2-1h1m-1.5-2.5v2m-1.5-2.5h1m-2-1h1m-1.5-2.5v2m-1-4v2m-1.5-2.5h1m-1.5-2.5v2m-1.5-2.5h1m-1.5-2.5v2m-1.5-2.5h1m-2-1h1m-1.5-2.5v2m-1.5-2.5h1m-2-1h1m-1.5-2.5v2m-1.5-2.5h1m-1.5-2.5v2m-1.5-2.5h1m-1.5-2.5v2m-1.5-2.5h1m-1.5-2.5v2m-1-4v2m-1.5-2.5h1m-1.5-2.5v2m-1.5-2.5h1m-1.5-2.5v2m-1.5-2.5h1m-1.5-2.5v2m-1.5-2.5h1m-1.5-2.5v2m-1-4v2m-1-4v2m-1-4v2m-1-4v2m-1.5-2.5h1m-1.5-2.5v2m-1-4v2m-1-4v2m-1-4v2m-1-4v2m-1-4v2m-1-4v2m-1-4v2m-1-5v3m-1-5v2m-1-4v2m-1-4v2m-1-4v2m-1-4v2m-1-4v2m-1-4v2m-1-5v3m-1-5v2m-1-4v2m-1-4v2m-1-5v3m-1-6v3m-1-5v2m-1-5v3m-1-6v3m-1-6v3m-1-6v3m-1-6v3m-1-6v3m-1-6v3m-1-6v3m-1-6v3m-1-7v4m-1-8v4m-1-7v3m-1-6v3m-1-5v2m-1-6v4m-1-8v4m-1-9v5m-1-10v5m-1-12v7m-1-14v7m-1-11v4m-1-10v6m-1-15v9m-1-18v9m-1-28v19m-1-64v45m1-55v10m1-30v20m1-27v7m1-13v6m1-15v9m1-18v9m1-15v6m1-11v5m1-9v4m1-8v4m1-8v4m1-11v7m1-14v7m1-11v4m1-8v4m1-8v4m1-7v3m1-7v4m1-9v5m1-9v4m1-8v4m1-7v3m1-6v3m1-7v4m1-8v4m1-7v3m1-7v4m1-8v4m1-7v3m1-6v3m1-6v3m1-6v3m1-6v3m1-6v3m1-6v3m1-6v3m1-6v3m1-6v3m1-7v4m1-7v3m1-6v3m1-6v3m1-6v3m1-5v2m1-5v3m1-6v3m1-6v3m1-6v3m1-5v2m1-5v3m1-6v3m1-5v2m1-5v3m1-5v2m1-5v3m1-5v2m1-5v3m1-5v2m1-4v2m1-5v3m1-5v2m1-4v2m1-4v2m1-5v3m1-6v3m1-6v3m1-6v3m1-5v2m1-4v2m1-4v2m1-4v2m1-5v3m1-6v3m1-5v2" stroke="#000080" fill="none"/>
<path d="M307.5 748v2m-1.5-2.5h1m-2-1h1m-1.5-2.5v2m-1.5-2.5h1m-2-1h1m-1.5-2.5v2m-1.5-2.5h1m-1.5-2.5v2m-1.5-2.5h1m-1.5-2.5v2m-1.5-2.5h1m-1.5-2.5v2m-1.5-2.5h1m-2-1h1m-1.5-2.5v2m-1.5-2.5h1m-2-1h1m-2-1h1m-2-1h1m-1.5-2.5v2m-1.5-2.5h1m-2-1h1m-2-1h1m-2-1h1m-1.5-2.5v2m-1.5-2.5h1m-2-1h1m-1.5-2.5v2m-1.5-2.5h1m-2-1h1m-2-1h1m-2-1h1m-1.5-2.5v2m-1.5-2.5h1m-2-1h1m-2-1h1m-2-1h1m-1.5-2.5v2m-1.5-2.5h1m-1.5-2.5v2m-1.5-2.5h1m-1.5-2.5v2m-1.5-2.5h1m-2-1h1m-2-1h1m-1.5-2.5v2m-1.5-2.5h1m-2-1h1m-2-1h1m-2-1h1m-1.5-2.5v2m-1.5-2.5h1m-1.5-2.5v2m-1.5-2.5h1m-1.5-2.5v2m-1.5-2.5h1m-2-1h1m-1.5-2.5v2m-1.5-2.5h1m-2-1h1m-1.5-2.5v2m-1.5-2.5h1m-2-1h1m-1.5-2.5v2m-1-4v2m-1.5-2.5h1m-1.5-2.5v2m-1.5-2.5h1m-1.5-2.5v2m-1.5-2.5h1m-2-1h1m-1.5-2.5v2m-1.5-2.5h1m-2-1h1m-2-1h1m-1.5-2.5v2m-1.5-2.5h1m-2-1h1m-1.5-2.5v2m-1.5-2.5h1m-2-1h1m-1.5-2.5v2m-1-4v2m-1.5-2.5h1m-1.5-2.5v2m-1.5-2.5h1m-1.5-2.5v2m-1.5-2.5h1m-1.5-2.5v2m-1.5-2.5h1m-1.5-2.5v2m-1.5-2.5h1m-1.5-2.5v2m-1-4v2m-1.5-2.5h1m-1.5-2.5v2m-1.5-2.5h1m-1.5-2.5v2m-1-4v2m-1-4v2m-1-4v2m-1.5-2.5h1m-1.5-2.5v2m-1-4v2m-1-4v2m-1-4v2m-1-4v2m-1-4v2m-1-4v2m-1-4v2m-1.5-2.5h1m-1.5-2.5v2m-1-4v2m-1-4v2m-1-4v2m-1-4v2m-1-4v2m-1-4v2m-1-4v2m-1-5v3m-1-5v2m-1-4v2m-1-4v2m-1-4v2m-1-5v3m-1-6v3m-1-6v3m-1-5v2m-1-4v2m-1-4v2m-1-5v3m-1-6v3m-1-6v3m-1-6v3m-1-6v3m-1-5v2m-1-5v3m-1-6v3m-1-5v2m-1-6v4m-1-8v4m-1-8v4m-1-8v4m-1-7v3m-1-7v4m-1-8v4m-1-9v5m-1-9v4m-1-10v6m-1-13v7m-1-11v4m-1-11v7m-1-16v9m-1-19v10m-1-20v10m-1-28v18m-1-55v37m1-57v20m1-32v12m1-21v9m1-15v6m1-13v7m1-15v8m1-15v7m1-11v4m1-9v5m1-9v4m1-12v8m1-14v6m1-10v4m1-7v3m1-7v4m1-9v5m1-9v4m1-8v4m1-8v4m1-8v4m1-10v6m1-10v4m1-7v3m1-6v3m1-6v3m1-7v4m1-8v4m1-8v4m1-7v3m1-6v3m1-7v4m1-7v3m1-6v3m1-6v3m1-6v3m1-5v2m1-5v3m1-6v3m1-7v4m1-7v3m1-7v4m1-7v3m1-5v2m1-5v3m1-5v2m1-5v3m1-5v2m1-5v3m1-6v3m1-5v2m1-5v3m1-6v3m1-5v2m1-5v3m1-6v3m1-6v3m1-6v3m1-6v3m1-5v2m1-5v3m1-5v2m1-4v2m1-4v2m1-5v3m1-6v3m1-6v3m1-6v3m1-5v2m1-4v2m1-4v2m1-5v3m1-5v2m1-5v3m1-5v2m1-5v3m1-5v2m1-4v2m1-4v2m1-4v2m1-4v2m1-4v2m1-5v3m1-5v2m1-5v3m1-5v2m1-4v2m1-4v2m1-4v2m1-5v3m1-5v2m1-4v2m1-4v2m1-4v2m1-4v2" stroke="#000080" fill="none"/>
<path d="M366 749.5h1m-1.5-2.5v2m-1-4v2m-1-4v2m-1.5-2.5h1m-1.5-2.5v2m-1-4v2m-1-4v2m-1-4v2m-1-4v2m-1-4v2m-1-4v2m-1-4v2m-1.5-2.5h1m-1.5-2.5v2m-1-4v2m-1.5-2.5h1m-1.5-2.5v2m-1.5-2.5h1m-1.5-2.5v2m-1-4v2m-1.5-2.5h1m-1.5-2.5v2m-1.5-2.5h1m-1.5-2.5v2m-1-4v2m-1.5-2.5h1m-1.5-2.5v2m-1.5-2.5h1m-1.5-2.5v2m-1-4v2m-1-4v2m-1-4v2m-1.5-2.5h1m-1.5-2.5v2m-1-4v2m-1.5-2.5h1m-1.5-2.5v2m-1.5-2.5h1m-1.5-2.5v2m-1.5-2.5h1m-1.5-2.5v2m-1.5-2.5h1m-1.5-2.5v2m-1.5-2.5h1m-1.5-2.5v2m-1-4v2m-1-4v2m-1-4v2m-1.5-2.5h1m-1.5-2.5v2m-1-4v2m-1.5-2.5h1m-1.5-2.5v2m-1.5-2.5h1m-1.5-2.5v2m-1.5-2.5h1m-2-1h1m-1.5-2.5v2m-1.5-2.5h1m-2-1h1m-1.5-2.5v2m-1-4v2m-1-4v2m-1-4v2m-1.5-2.5h1m-1.5-2.5v2m-1.5-2.5h1m-2-1h1m-1.5-2.5v2m-1.5-2.5h1m-2-1h1m-1.5-2.5v2m-1-4v2m-1-4v2m-1-4v2m-1.5-2.5h1m-1.5-2.5v2m-1-4v2m-1.5-2.5h1m-1.5-2.5v2m-1.5-2.5h1m-1.5-2.5v2m-1-4v2m-1-4v2m-1-4v2m-1.5-2.5h1m-1.5-2.5v2m-1-4v2m-1-4v2m-1-4v2m-1.5-2.5h1m-1.5-2.5v2m-1-4v2m-1.5-2.5h1m-1.5-2.5v2m-1.5-2.5h1m-1.5-2.5v2m-1-4v2m-1-4v2m-1-4v2m-1-4v2m-1-4v2m-1-4v2m-1-4v2m-1-5v3m-1-5v2m-1-4v2m-1-4v2m-1-4v2m-1-4v2m-1-4v2m-1-4v2m-1-5v3m-1-5v2m-1-4v2m-1-4v2m-1-5v3m-1-5v2m-1-4v2m-1-4v2m-1-5v3m-1-5v2m-1-4v2m-1-4v2m-1-4v2m-1-5v3m-1-5v2m-1-5v3m-1-6v3m-1-6v3m-1-6v3m-1-7v4m-1-7v3m-1-6v3m-1-6v3m-1-6v3m-1-7v4m-1-8v4m-1-8v4m-1-8v4m-1-9v5m-1-9v4m-1-9v5m-1-9v4m-1-9v5m-1-9v4m-1-9v5m-1-10v5m-1-13v8m-1-18v10m-1-18v8m-1-25v17m-1-81v64m1-74v10m1-18v8m1-17v9m1-18v9m1-16v7m1-12v5m1-13v8m1-15v7m1-12v5m1-10v5m1-11v6m1-10v4m1-8v4m1-8v4m1-9v5m1-11v6m1-10v4m1-7v3m1-6v3m1-6v3m1-7v4m1-8v4m1-8v4m1-8v4m1-8v4m1-7v3m1-7v4m1-7v3m1-7v4m1-7v3m1-7v4m1-7v3m1-6v3m1-6v3m1-6v3m1-6v3m1-6v3m1-6v3m1-7v4m1-7v3m1-6v3m1-6v3m1-6v3m1-6v3m1-6v3m1-6v3m1-5v2m1-5v3m1-6v3m1-6v3m1-6v3m1-5v2m1-4v2m1-4v2m1-5v3m1-6v3m1-6v3m1-6v3m1-5v2m1-5v3m1-5v2m1-5v3m1-5v2m1-5v3m1-5v2m1-5v3m1-5v2m1-5v3m1-5v2m1-5v3m1-5v2m1-4v2m1-4v2m1-4v2m1-5v3m1-5v2m1-4v2m1-4v2m1-4v2m1-4v2" stroke="#000080" fill="none"/>
<path d="M424.5 748v2m-1-6v4m-1-7v3m-1-6v3m-1-6v3m-1-6v3m-1-6v3m-1-5v2m-1-5v3m-1-6v3m-1-5v2m-1-6v4m-1-8v4m-1-7v3m-1-6v3m-1-5v2m-1-5v3m-1-6v3m-1-6v3m-1-6v3m-1-6v3m-1-5v2m-1-5v3m-1-5v2m-1-4v2m-1-4v2m-1-5v3m-1-6v3m-1-6v3m-1-6v3m-1-6v3m-1-5v2m-1-5v3m-1-5v2m-1-4v2m-1-4v2m-1-4v2m-1-4v2m-1-4v2m-1-4v2m-1-5v3m-1-6v3m-1-5v2m-1-5v3m-1-5v2m-1-4v2m-1-4v2m-1-5v3m-1-5v2m-1-4v2m-1-4v2m-1-4v2m-1-4v2m-1-4v2m-1-4v2m-1-5v3m-1-5v2m-1-4v2m-1-4v2m-1-5v3m-1-5v2m-1-4v2m-1-4v2m-1-4v2m-1-4v2m-1-4v2m-1-4v2m-1-5v3m-1-5v2m-1-4v2m-1-4v2m-1-5v3m-1-5v2m-1-4v2m-1-4v2m-1-4v2m-1-4v2m-1-4v2m-1-4v2m-1-5v3m-1-6v3m-1-6v3m-1-5v2m-1-4v2m-1-4v2m-1-4v2m-1-4v2m-1-4v2m-1-5v3m-1-5v2m-1-5v3m-1-6v3m-1-5v2m-1-5v3m-1-5v2m-1-4v2m-1-4v2m-1-5v3m-1-7v4m-1-7v3m-1-6v3m-1-5v2m-1-4v2m-1-4v2m-1-6v4m-1-8v4m-1-7v3m-1-6v3m-1-6v3m-1-6v3m-1-6v3m-1-6v3m-1-7v4m-1-8v4m-1-8v4m-1-7v3m-1-6v3m-1-7v4m-1-9v5m-1-10v5m-1-11v6m-1-11v5m-1-9v4m-1-10v6m-1-12v6m-1-10v4m-1-11v7m-1-17v10m-1-20v10m-1-30v20m-1-62v42m1-60v18m1-28v10m1-20v10m1-20v10m1-20v10m1-18v8m1-14v6m1-12v6m1-12v6m1-11v5m1-9v4m1-8v4m1-9v5m1-11v6m1-12v6m1-11v5m1-9v4m1-8v4m1-8v4m1-7v3m1-7v4m1-7v3m1-7v4m1-8v4m1-8v4m1-8v4m1-8v4m1-8v4m1-8v4m1-7v3m1-6v3m1-6v3m1-6v3m1-6v3m1-5v2m1-6v4m1-8v4m1-8v4m1-7v3m1-6v3m1-6v3m1-5v2m1-4v2m1-4v2m1-5v3m1-7v4m1-7v3m1-6v3m1-5v2m1-5v3m1-5v2m1-5v3m1-7v4m1-7v3m1-6v3m1-6v3m1-5v2m1-5v3m1-6v3m1-5v2m1-4v2m1-4v2m1-4v2m1-4v2" stroke="#000080" fill="none"/>
<path d="M482.5 746v4m-1-12v8m-1-17v9m-1-25v16m-1-24v8m-1-16v8m-1-17v9m-1-17v8m-1-17v9m-1-18v9m-1-17v8m-1-16v8m-1-17v9m-1-17v8m-1-17v9m-1-17v8m-1-15v7m-1-11v4m-1-11v7m-1-15v8m-1-15v7m-1-11v4m-1-9v5m-1-9v4m-1-10v6m-1-13v7m-1-11v4m-1-9v5m-1-9v4m-1-9v5m-1-9v4m-1-8v4m-1-8v4m-1-8v4m-1-8v4m-1-9v5m-1-10v5m-1-9v4m-1-7v3m-1-6v3m-1-7v4m-1-8v4m-1-8v4m-1-8v4m-1-9v5m-1-9v4m-1-9v5m-1-9v4m-1-8v4m-1-7v3m-1-6v3m-1-7v4m-1-9v5m-1-10v5m-1-11v6m-1-11v5m-1-9v4m-1-8v4m-1-8v4m-1-8v4m-1-8v4m-1-9v5m-1-9v4m-1-12v8m-1-15v7m-1-12v5m-1-13v8m-1-15v7m-1-13v6m-1-15v9m-1-21v12m-1-30v18m-1-66v48m1-69v21m1-33v12m1-24v12m1-21v9m1-15v6m1-13v7m1-14v7m1-13v6m1-11v5m1-9v4m1-9v5m1-10v5m1-10v5m1-10v5m1-11v6m1-11v5m1-10v5m1-9v4m1-9v5m1-9v4m1-8v4m1-8v4m1-9v5m1-9v4m1-8v4m1-7v3m1-6v3m1-6v3m1-7v4m1-7v3m1-6v3m1-7v4m1-7v3m1-6v3m1-7v4m1-7v3m1-6v3m1-7v4m1-8v4m1-7v3m1-6v3m1-5v2m1-5v3m1-5v2" stroke="#000080" fill="none"/>
<path d="M541.5 729v21m1-37v16m1-24v8m1-25v17m1-25v8m1-17v9m1-18v9m1-17v8m1-16v8m1-17v9m1-17v8m1-17v9m1-15v6m1-10v4m1-11v7m1-16v9m1-17v8m1-15v7m1-11v4m1-11v7m1-15v8m1-17v9m1-16v7m1-11v4m1-11v7m1-15v8m1-16v8m1-18v10m1-17v7m1-11v4m1-11v7m1-15v8m1-17v9m1-18v9m1-18v9m1-19v10m1-20v10m1-28v18m1-26v8m1-27v19m1-39v20m1-42v22m1-70v48m1-99v51m1-75v24m1-36v12m1-26v14m1-28v14m1-28v14m1-26v12m1-20v8m1-16v8m1-15v7m1-11v4m1-10v6m1-15v9m1-16v7m1-11v4m1-9v5m1-10v5m1-10v5m1-10v5m1-10v5m1-10v5m1-10v5m1-11v6m1-10v4m1-8v4m1-8v4m1-6v2" stroke="#000080" fill="none"/>
<path d="M600.5 746v4m1-12v8m1-17v9m1-15v6m1-10v4m1-10v6m1-12v6m1-10v4m1-8v4m1-8v4m1-11v7m1-13v6m1-10v4m1-9v5m1-9v4m1-9v5m1-9v4m1-7v3m1-6v3m1-5v2m1-6v4m1-8v4m1-9v5m1-9v4m1-7v3m1-6v3m1-6v3m1-7v4m1-8v4m1-7v3m1-6v3m1-6v3m1-7v4m1-8v4m1-8v4m1-7v3m1-5v2m1-5v3m1-6v3m1-6v3m1-6v3m1-6v3m1-6v3m1-7v4m1-8v4m1-7v3m1-6v3m1-6v3m1-6v3m1-6v3m1-6v3m1-6v3m1-5v2m1-4v2m1-4v2m1-5v3m1-6v3m1-5v2m1-5v3m1-6v3m1-5v2m1-5v3" stroke="#000080" fill="none"/>
<path d="M659.5 748v2m1-6v4m1-10v6" stroke="#000080" fill="none"/>
<rect x="61" y="321" width="601" height="1" fill="#fff"/>
<rect x="61" y="449" width="601" height="1" fill="#fff"/>
<rect x="61" y="529" width="601" height="1" fill="#fff"/>
<rect x="61" y="586" width="601" height="1" fill="#fff"/>
<rect x="61" y="630" width="601" height="1" fill="#fff"/>
<rect x="61" y="665" width="601" height="1" fill="#fff"/>
<rect x="61" y="694" width="601" height="1" fill="#fff"/>
<rect x="61" y="719" width="601" height="1" fill="#fff"/>
<rect x="61" y="740" width="601" height="1" fill="#fff"/>
<polyline points="-1747.5,749.5 -1048.5,50.5" stroke="#fff" fill="none"/>
<polyline points="-1687.5,749.5 -988.5,50.5" stroke="#fff" fill="none"/>
<polyline points="-1627.5,749.5 -928.5,50.5" stroke="#fff" fill="none"/>
<polyline points="-1567.5,749.5 -868.5,50.5" stroke="#fff" fill="none"/>
<polyline points="-1507.5,749.5 -808.5,50.5" stroke="#fff" fill="none"/>
<polyline points="-1447.5,749.5 -748.5,50.5" stroke="#fff" fill="none"/>
<polyline points="-1387.5,749.5 -688.5,50.5" stroke="#fff" fill="none"/>
<polyline points="-1327.5,749.5 -628.5,50.5" stroke="#fff" fill="none"/>
<polyline points="-1267.5,749.5 -568.5,50.5" stroke="#fff" fill="none"/>
<polyline points="-1207.5,749.5 -508.5,50.5" stroke="#fff" fill="none"/>
<polyline points="-1147.5,749.5 -448.5,50.5" stroke="#fff" fill="none"/>
<polyline points="-1087.5,749.5 -388.5,50.5" stroke="#fff" fill="none"/>
<polyline points="-1027.5,749.5 -328.5,50.5" stroke="#fff" fill="none"/>
<polyline points="-967.5,749.5 -268.5,50.5" stroke="#fff" fill="none"/>
<polyline points="-907.5,749.5 -208.5,50.5" stroke="#fff" fill="none"/>
<polyline points="-847.5,749.5 -148.5,50.5" stroke="#fff" fill="none"/>
<polyline points="-787.5,749.5 -88.5,50.5" stroke="#fff" fill="none"/>
<polyline points="-727.5,749.5 -28.5,50.5" stroke="#fff" fill="none"/>
<polyline points="-667.5,749.5 31.5,50.5" stroke="#fff" fill="none"/>
<polyline points="-607.5,749.5 91.5,50.5" stroke="#fff" fill="none"/>
<polyline points="-547.5,749.5 151.5,50.5" stroke="#fff" fill="none"/>
<polyline points="-487.5,749.5 211.5,50.5" stroke="#fff" fill="none"/>
<polyline points="-427.5,749.5 271.5,50.5" stroke="#fff" fill="none"/>
<polyline points="-367.5,749.5 331.5,50.5" stroke="#fff" fill="none"/>
<polyline points="-307.5,749.5 391.5,50.5" stroke="#fff" fill="none"/>
<polyline points="-247.5,749.5 451.5,50.5" stroke="#fff" fill="none"/>
<polyline points="-187.5,749.5 511.5,50.5" stroke="#fff" fill="none"/>
<polyline points="-127.5,749.5 571.5,50.5" stroke="#fff" fill="none"/>
<polyline points="-67.5,749.5 631.5,50.5" stroke="#fff" fill="none"/>
<polyline points="-7.5,749.5 691.5,50.5" stroke="#fff" fill="none"/>
<polyline points="52.5,749.5 751.5,50.5" stroke="#fff" fill="none"/>
<polyline points="112.5,749.5 811.5,50.5" stroke="#fff" fill="none"/>
<polyline points="172.5,749.5 871.5,50.5" stroke="#fff" fill="none"/>
<polyline points="232.5,749.5 931.5,50.5" stroke="#fff" fill="none"/>
<polyline points="292.5,749.5 991.5,50.5" stroke="#fff" fill="none"/>
<polyline points="352.5,749.5 1051.5,50.5" stroke="#fff" fill="none"/>
<polyline points="412.5,749.5 1111.5,50.5" stroke="#fff" fill="none"/>
<polyline points="472.5,749.5 1171.5,50.5" stroke="#fff" fill="none"/>
<polyline points="532.5,749.5 1231.5,50.5" stroke="#fff" fill="none"/>
<polyline points="592.5,749.5 1291.5,50.5" stroke="#fff" fill="none"/>
<polyline points="652.5,749.5 1351.5,50.5" stroke="#fff" fill="none"/>
<polyline points="712.5,749.5 1411.5,50.5" stroke="#fff" fill="none"/>
<path d="M713 50.5h5M715.5 48v5" stroke="#fff" fill="none"/>
<path d="M578 218.5h5M580.5 216v5" stroke="#fff" fill="none"/>
<path d="M444 321.5h5M446.5 319v5" stroke="#fff" fill="none"/>
<path d="M410 394.5h5M412.5 392v5" stroke="#fff" fill="none"/>
<path d="M417 449.5h5M419.5 447v5" stroke="#fff" fill="none"/>
<path d="M424 493.5h5M426.5 491v5" stroke="#fff" fill="none"/>
<path d="M431 529.5h5M433.5 527v5" stroke="#fff" fill="none"/>
<path d="M437 560.5h5M439.5 558v5" stroke="#fff" fill="none"/>
<path d="M440 586.5h5M442.5 584v5" stroke="#fff" fill="none"/>
<path d="M442 610.5h5M444.5 608v5" stroke="#fff" fill="none"/>
<path d="M452 630.5h5M454.5 628v5" stroke="#fff" fill="none"/>
<path d="M451 648.5h5M453.5 646v5" stroke="#fff" fill="none"/>
<path d="M460 665.5h5M462.5 663v5" stroke="#fff" fill="none"/>
<path d="M464 669.5h5M466.5 667v5" stroke="#fff" fill="none"/>
<path d="M469 683.5h5M471.5 681v5" stroke="#fff" fill="none"/>
<path d="M475 696.5h5M477.5 694v5" stroke="#fff" fill="none"/>
<path d="M484 705.5h5M486.5 703v5" stroke="#fff" fill="none"/>
<path d="M490 713.5h5M492.5 711v5" stroke="#fff" fill="none"/>
<path d="M499 720.5h5M501.5 718v5" stroke="#fff" fill="none"/>
<path d="M504 727.5h5M506.5 725v5" stroke="#fff" fill="none"/>
<path d="M507 729.5h5M509.5 727v5" stroke="#fff" fill="none"/>
<path d="M661 117.5h1m-1.5 0.5v2m-1.5 0.5h1m-2 1h1m-2 1h1m-1.5 0.5v2m-1.5 0.5h1m-2 1h1m-2 1h1m-1.5 0.5v2m-1.5 0.5h1m-2 1h1m-2 1h1m-1.5 0.5v2m-1.5 0.5h1m-2 1h1m-2 1h1m-2 1h1m-1.5 0.5v2m-1.5 0.5h1m-2 1h1m-2 1h1m-1.5 0.5v2m-1.5 0.5h1m-2 1h1m-2 1h1m-1.5 0.5v2m-1.5 0.5h1m-2 1h1m-2 1h1m-1.5 0.5v2m-1.5 0.5h1m-2 1h1m-2 1h1m-1.5 0.5v2m-1.5 0.5h1m-2 1h1m-2 1h1m-1.5 0.5v2m-1.5 0.5h1m-2 1h1m-2 1h1m-1.5 0.5v2m-1.5 0.5h1m-2 1h1m-2 1h1m-1.5 0.5v2m-1.5 0.5h1m-2 1h1m-2 1h1m-1.5 0.5v2m-1.5 0.5h1m-2 1h1m-2 1h1m-1.5 0.5v2m-1.5 0.5h1m-2 1h1m-2 1h1m-1.5 0.5v2m-1.5 0.5h1m-2 1h1m-2 1h1m-2 1h1m-1.5 0.5v2m-1.5 0.5h1m-2 1h1m-2 1h1m-1.5 0.5v2m-1.5 0.5h1m-2 1h1m-2 1h1m-1.5 0.5v2m-1.5 0.5h1m-2 1h1m-2 1h1m-1.5 0.5v2m-1.5 0.5h1m-2 1h1m-2 1h1m-1.5 0.5v2m-1.5 0.5h1m-2 1h1m-2 1h1m-3 1h2m-3 1h1m-2 1h1m-3 1h2m-3 1h1m-2 1h1m-3 1h2m-3 1h1m-2 1h1m-2 1h1m-3 1h2m-3 1h1m-2 1h1m-3 1h2m-3 1h1m-2 1h1m-3 1h2m-3 1h1m-2 1h1m-2 1h1m-3 1h2m-3 1h1m-2 1h1m-3 1h2m-3 1h1m-2 1h1m-3 1h2m-3 1h1m-2 1h1m-2 1h1m-3 1h2m-3 1h1m-2 1h1m-3 1h2m-3 1h1m-2 1h1m-3 1h2m-3 1h1m-2 1h1m-2 1h1m-3 1h2m-3 1h1m-2 1h1m-3 1h2m-3 1h1m-2 1h1m-3 1h2m-3 1h1m-2 1h1m-3 1h2m-3 1h1m-2 1h1m-2 1h1m-3 1h2m-3 1h1m-2 1h1m-3 1h2m-3 1h1m-2 1h1m-3 1h2m-3 1h1m-2 1h1m-2 1h1m-3 1h2m-3 1h1m-2 1h1m-3 1h2m-3 1h1m-2 1h1m-3 1h2m-3 1h1m-2 1h1m-2 1h1m-3 1h2m-3 1h1m-2 1h1m-3 1h2m-3 1h1m-2 1h1m-3 1h2m-3 1h1m-2 1h1m-2 1h1m-3 1h2m-3 1h1m-2 1h1m-3 1h2m-3 1h1m-2 1h1m-3 1h2m-3 1h1m-2 1h1m-2 1h1m-3 1h2m-3 1h1m-2 1h1m-3 1h2m-3 1h1m-2 1h1m-3 1h2m-3 1h1m-1.5 0.5v2m-1 0v2m-1 0v2m-1 0v2m-1 0v2m-1 0v2m-1 0v2m-1 0v3m-1 0v2m-1 0v2m-1 0v2m-1 0v2m-1 0v2m-1 0v2m-1 0v3m-1 0v2m-1 0v2m-1 0v2m-1 0v2m-1 0v2m-1 0v3m-1 0v2m-1 0v2m-1 0v2m-1 0v2m-1 0v2m-1 0v2m-1 0v3m-1 0v2m-1 0v2m-1 0v2m-1 0v2m-1 0v2m-1 0v2m-1 0v5m1 0v8m1 0v8m1 0v8m1 0v8m1 0v8m1 0v8m1 0v7m1 0v6m1 0v6m1 0v7m1 0v6m1 0v6m1 0v6m1 0v6m1 0v5m1 0v5m1 0v6m1 0v5m1 0v5m1 0v5m1 0v5m1 0v5m1 0v5m1 0v6m1 0v5m1 0v5m1 0v7m1 0v9m1 0v8m1 0v11m1 0v12m1 0v7m1 0v2m1 0v2m1 0v2m1 0v2m1 0v2m1 0v2m1 0v2m1 0v2m1 0v2m1 0v10m-1 0v9m1 0v2m1 0v2m1 0v2m1 0v2m1 0v2m1 0v2m1 0v2m1 0v2m0.5 0.5h1m0 1h1m0 1h1m0 1h1m0.5 0.5v2m1 0v3m1 0v3m1 0v2m1 0v3m1 0v3m1 0v2m1 0v2m1 0v2m1 0v2m1 0v2m1 0v2m0.5 0.5h1m0 1h1m0 1h1m0 1h1m0 1h1m0 1h1m0 1h1m0 1h1m0 1h1m0.5 0.5v2m0.5 0.5h1m0 1h1m0.5 0.5v2m0.5 0.5h1m0 1h1m0 1h1m0 1h2m0 1h1m0 1h1m0 1h2m0 1h1m0 1h1m0.5 0.5v2m0.5 0.5h1m0 1h1m0.5 0.5v2m0.5 0.5h1m0 1h2m0 1h1" stroke="#ff0000" fill="none"/>
<path d="M571 50.5h5M573.5 48v5" stroke="#fff" fill="none"/>
<path d="M423 218.5h5M425.5 216v5" stroke="#fff" fill="none"/>
<path d="M396 321.5h5M398.5 319v5" stroke="#fff" fill="none"/>
<path d="M407 394.5h5M409.5 392v5" stroke="#fff" fill="none"/>
<path d="M408 449.5h5M410.5 447v5" stroke="#fff" fill="none"/>
<path d="M413 493.5h5M415.5 491v5" stroke="#fff" fill="none"/>
<path d="M430 529.5h5M432.5 527v5" stroke="#fff" fill="none"/>
<path d="M432 560.5h5M434.5 558v5" stroke="#fff" fill="none"/>
<path d="M427 586.5h5M429.5 584v5" stroke="#fff" fill="none"/>
<path d="M424 610.5h5M426.5 608v5" stroke="#fff" fill="none"/>
<path d="M444 630.5h5M446.5 628v5" stroke="#fff" fill="none"/>
<path d="M447 648.5h5M449.5 646v5" stroke="#fff" fill="none"/>
<path d="M450 665.5h5M452.5 663v5" stroke="#fff" fill="none"/>
<path d="M460 669.5h5M462.5 667v5" stroke="#fff" fill="none"/>
<path d="M459 683.5h5M461.5 681v5" stroke="#fff" fill="none"/>
<path d="M457 696.5h5M459.5 694v5" stroke="#fff" fill="none"/>
<path d="M457 705.5h5M459.5 703v5" stroke="#fff" fill="none"/>
<path d="M459 713.5h5M461.5 711v5" stroke="#fff" fill="none"/>
<path d="M463 720.5h5M465.5 718v5" stroke="#fff" fill="none"/>
<path d="M465 727.5h5M467.5 725v5" stroke="#fff" fill="none"/>
<path d="M465 729.5h5M467.5 727v5" stroke="#fff" fill="none"/>
<path d="M573 50.5h1m-2 1h1m-2 1h1m-2 1h1m-1.5 0.5v2m-1.5 0.5h1m-2 1h1m-2 1h1m-2 1h1m-2 1h1m-2 1h1m-1.5 0.5v2m-1.5 0.5h1m-2 1h1m-2 1h1m-2 1h1m-2 1h1m-2 1h1m-1.5 0.5v2m-1.5 0.5h1m-2 1h1m-2 1h1m-2 1h1m-2 1h1m-2 1h1m-2 1h1m-1.5 0.5v2m-1.5 0.5h1m-2 1h1m-2 1h1m-2 1h1m-2 1h1m-2 1h1m-1.5 0.5v2m-1.5 0.5h1m-2 1h1m-2 1h1m-2 1h1m-2 1h1m-2 1h1m-2 1h1m-1.5 0.5v2m-1.5 0.5h1m-2 1h1m-2 1h1m-2 1h1m-2 1h1m-2 1h1m-1.5 0.5v2m-1.5 0.5h1m-2 1h1m-2 1h1m-2 1h1m-2 1h1m-2 1h1m-1.5 0.5v2m-1.5 0.5h1m-2 1h1m-2 1h1m-2 1h1m-2 1h1m-2 1h1m-2 1h1m-1.5 0.5v2m-1.5 0.5h1m-2 1h1m-2 1h1m-2 1h1m-2 1h1m-2 1h1m-1.5 0.5v2m-1.5 0.5h1m-2 1h1m-2 1h1m-2 1h1m-2 1h1m-2 1h1m-2 1h1m-1.5 0.5v2m-1.5 0.5h1m-2 1h1m-2 1h1m-2 1h1m-2 1h1m-2 1h1m-1.5 0.5v2m-1.5 0.5h1m-2 1h1m-2 1h1m-2 1h1m-2 1h1m-2 1h1m-1.5 0.5v2m-1.5 0.5h1m-2 1h1m-2 1h1m-2 1h1m-2 1h1m-2 1h1m-2 1h1m-1.5 0.5v2m-1.5 0.5h1m-2 1h1m-2 1h1m-2 1h1m-2 1h1m-2 1h1m-1.5 0.5v2m-1.5 0.5h1m-2 1h1m-2 1h1m-2 1h1m-2 1h1m-2 1h1m-2 1h1m-1.5 0.5v2m-1.5 0.5h1m-2 1h1m-2 1h1m-2 1h1m-2 1h1m-2 1h1m-1.5 0.5v2m-1.5 0.5h1m-2 1h1m-2 1h1m-2 1h1m-2 1h1m-2 1h1m-1.5 0.5v2m-1.5 0.5h1m-2 1h1m-2 1h1m-2 1h1m-2 1h1m-2 1h1m-2 1h1m-1.5 0.5v2m-1.5 0.5h1m-2 1h1m-2 1h1m-2 1h1m-2 1h1m-2 1h1m-1.5 0.5v2m-1.5 0.5h1m-2 1h1m-2 1h1m-1.5 0.5v2m-1 0v4m-1 0v4m-1 0v4m-1 0v4m-1 0v3m-1 0v4m-1 0v4m-1 0v4m-1 0v4m-1 0v4m-1 0v3m-1 0v4m-1 0v4m-1 0v4m-1 0v4m-1 0v3m-1 0v4m-1 0v4m-1 0v4m-1 0v4m-1 0v4m-1 0v3m-1 0v4m-1 0v4m-1 0v4m-1 0v4m-1 0v5m1 0v6m1 0v7m1 0v7m1 0v6m1 0v7m1 0v7m1 0v6m1 0v7m1 0v7m1 0v6m1 0v31m1 0v32m1 0v9m1 0v9m1 0v8m1 0v9m1 0v6m1 0v2m1 0v2m1 0v2m1 0v2m1 0v2m1 0v2m1 0v2m1 0v3m1 0v2m1 0v2m1 0v2m1 0v2m1 0v2m1 0v2m1 0v2m1 0v2m1 0v9m1 0v16m1 0v10m-1 0v5m-1 0v6m-1 0v5m-1 0v5m-1 0v7m-1 0v8m-1 0v8m-1 0v4m0.5 0.5h1m0 1h1m0 1h1m0 1h1m0 1h1m0 1h1m0 1h1m0 1h1m0 1h1m0 1h1m0 1h1m0 1h1m0 1h1m0 1h1m0 1h1m0 1h1m0 1h1m0 1h1m0 1h1m0.5 0.5v4m1 0v6m1 0v6m1 0v5m1 0v6m1 0v6m1 0v3m0.5-0.5h1m0 1h2m0 1h3m0 1h2m0 1h2m-0.5 0.5v7m-1 0v10m-1 0v6m-1 0v15m1 0v4m1 0v2m1 0v2m1 0v2m1 0v2m1 0v2m1 0v4m1 0v4" stroke="#00ffff" fill="none"/>
<path d="M480.5 694v3m-1-17v14m-1-22v8m-1-21v13m-1-22v9m-1-17v8m-1-17v9m-1-18v9m-1-17v8m-1-17v9m-1-18v9m-1-13v4m-1-14v10m-1-15v5m-1-9v4m-1-8v4m-1-13v9m-1-13v4m-1-9v5m-1-10v5m-1-9v4m-1-6v2m-1-6v4m-1-9v5m-1-10v5m-1-10v5m-1-13v8m-1-13v5m-1-9v4m-1-9v5m-1-9v4m-1-9v5m-1-10v5m-1-9v4m-1-10v6m-1-10v4m-1-6v2m-1-6v4m-1-10v6m-1-10v4m-1-6v2m-1-7v5m-1-11v6m-1-11v5m-1-9v4m-1-9v5m-1-9v4m-1-8v4m-1-9v5m-1-9v4m-1-9v5m-1-9v4m-1-9v5m-1-10v5m-1-15v10m-1-16v6m-1-11v5m-1-11v6m-1-12v6m-1-17v11m-1-17v6m-1-19v13m-1-26v13m-1-73v60m1-74v14m1-28v14m1-24v10m1-15v5m1-15v10m1-16v6m1-11v5m1-11v6m1-11v5m1-11v6m1-12v6m1-12v6m1-12v6m1-11v5m1-8v3m1-8v5m1-10v5m1-8v3m1-8v5m1-10v5m1-9v4m1-7v3m1-7v4m1-8v4m1-8v4m1-7v3m1-7v4m1-8v4m1-8v4m1-8v4m1-8v4m1-7v3m1-6v3m1-5v2m1-5v3m1-6v3m1-6v3m1-7v4m1-8v4m1-7v3m1-6v3m1-6v3m1-5v2" stroke="#ffc0ff" fill="none"/>
<path d="M480 696.5h1m0 1h2m0 1h1m0 1h1m0 1h1m0 1h1m0 1h1m0 1h2m0 1h1m0 1h2m0 1h2m0 1h1m0 1h2m0 1h1m0 1h1m0 1h2m0 1h1m0 1h1m0 1h1m0 1h1m0 1h1m0 1h2m0 1h1m0 1h2m0 1h2m0 1h1m0 1h2m0 1h1m0 1h1m0 1h2m0 1h1m0 1h2m0 1h1m0 1h1" stroke="#ffc0ff" fill="none"/>
<path d="M476.5 699v7m-1-20v13m-1-25v12m-1-21v9m-1-18v9m-1-17v8m-1-12v4m-1-13v9m-1-14v5m-1-14v9m-1-13v4m-1-13v9m-1-13v4m-1-9v5m-1-14v9m-1-14v5m-1-10v5m-1-9v4m-1-8v4m-1-13v9m-1-13v4m-1-9v5m-1-9v4m-1-9v5m-1-10v5m-1-9v4m-1-6v2m-1-6v4m-1-9v5m-1-10v5m-1-9v4m-1-8v4m-1-8v4m-1-9v5m-1-9v4m-1-8v4m-1-6v2m-1-6v4m-1-9v5m-1-10v5m-1-10v5m-1-9v4m-1-6v2m-1-7v5m-1-10v5m-1-9v4m-1-7v3m-1-8v5m-1-9v4m-1-6v2m-1-5v3m-1-7v4m-1-8v4m-1-9v5m-1-9v4m-1-9v5m-1-9v4m-1-9v5m-1-9v4m-1-9v5m-1-10v5m-1-10v5m-1-16v11m-1-17v6m-1-17v11m-1-17v6m-1-25v19m-1-38v19m-1-72v53m1-71v18m1-27v9m1-18v9m1-19v10m1-16v6m1-16v10m1-16v6m1-12v6m1-11v5m1-11v6m1-12v6m1-12v6m1-10v4m1-8v4m1-9v5m1-11v6m1-11v5m1-8v3m1-6v3m1-7v4m1-9v5m1-10v5m1-9v4m1-8v4m1-8v4m1-7v3m1-7v4m1-7v3m1-6v3m1-5v2m1-6v4m1-8v4m1-8v4m1-8v4m1-7v3m1-6v3m1-5v2m1-5v3m1-6v3m1-6v3m1-6v3m1-6v3m1-6v3m1-5v2" stroke="#ff00ff" fill="none"/>
<path d="M418.5 397v3m-1-8v5m-1-10v5m-1-16v11m-1-17v6m-1-17v11m-1-17v6m-1-25v19m-1-38v19m-1-72v53m1-71v18m1-27v9m1-18v9m1-19v10m1-16v6m1-16v10m1-16v6m1-12v6m1-11v5m1-11v6m1-12v6m1-12v6m1-10v4m1-8v4m1-9v5m1-11v6m1-11v5m1-8v3m1-6v3m1-7v4m1-9v5m1-10v5m1-9v4m1-8v4m1-8v4m1-7v3m1-7v4m1-7v3m1-6v3m1-5v2m1-6v4m1-8v4m1-8v4m1-8v4m1-7v3m1-6v3m1-5v2m1-5v3m1-6v3m1-6v3m1-6v3m1-6v3m1-6v3m1-5v2" stroke="#ff00ff" fill="none"/>
<path d="M476 705.5h1m0 1h2m0 1h1m0 1h2m0 1h1m0 1h1m0 1h1m0 1h2m0 1h1m0 1h2m0 1h1m0 1h2m0 1h1m0 1h1m0 1h1m0 1h2m0 1h1m0 1h2m0 1h1m0 1h1m0 1h1m0 1h2m0 1h1m0 1h2m0 1h1" stroke="#ff00ff" fill="none"/>
<path d="M476 705.5h1m-1.5 0.5v2m-1 0v2m-1 0v2m-1 0v2m-1 0v2m-1 0v2m-1.5 0.5h1m-1.5 0.5v2m-1 0v2m-1 0v2m-1 0v2m-1 0v2m-1.5 0.5h1" stroke="#ff00ff" fill="none"/>
<path d="M149 50.5h5M151.5 48v5" stroke="#fff" fill="none"/>
<path d="M221 218.5h5M223.5 216v5" stroke="#fff" fill="none"/>
<path d="M209 321.5h5M211.5 319v5" stroke="#fff" fill="none"/>
<path d="M149 394.5h5M151.5 392v5" stroke="#fff" fill="none"/>
<path d="M161 449.5h5M163.5 447v5" stroke="#fff" fill="none"/>
<path d="M167 493.5h5M169.5 491v5" stroke="#fff" fill="none"/>
<path d="M191 529.5h5M193.5 527v5" stroke="#fff" fill="none"/>
<path d="M209 560.5h5M211.5 558v5" stroke="#fff" fill="none"/>
<path d="M203 586.5h5M205.5 584v5" stroke="#fff" fill="none"/>
<path d="M185 610.5h5M187.5 608v5" stroke="#fff" fill="none"/>
<path d="M185 630.5h5M187.5 628v5" stroke="#fff" fill="none"/>
<path d="M191 648.5h5M193.5 646v5" stroke="#fff" fill="none"/>
<path d="M197 665.5h5M199.5 663v5" stroke="#fff" fill="none"/>
<path d="M191 669.5h5M193.5 667v5" stroke="#fff" fill="none"/>
<path d="M185 683.5h5M187.5 681v5" stroke="#fff" fill="none"/>
<path d="M179 696.5h5M181.5 694v5" stroke="#fff" fill="none"/>
<path d="M149 705.5h5M151.5 703v5" stroke="#fff" fill="none"/>
<path d="M137 713.5h5M139.5 711v5" stroke="#fff" fill="none"/>
<path d="M119 720.5h5M121.5 718v5" stroke="#fff" fill="none"/>
<path d="M107 727.5h5M109.5 725v5" stroke="#fff" fill="none"/>
<path d="M101 729.5h5M103.5 727v5" stroke="#fff" fill="none"/>
<path d="M151.5 50v2m1 0v2m1 0v2m1 0v3m1 0v2m1 0v2m1 0v3m1 0v2m1 0v2m1 0v3m1 0v2m1 0v2m1 0v3m1 0v2m1 0v2m1 0v3m1 0v2m1 0v2m1 0v3m1 0v2m1 0v2m1 0v3m1 0v2m1 0v2m1 0v3m1 0v2m1 0v2m1 0v3m1 0v2m1 0v2m1 0v3m1 0v2m1 0v2m1 0v3m1 0v2m1 0v2m1 0v3m1 0v2m1 0v2m1 0v3m1 0v2m1 0v2m1 0v3m1 0v2m1 0v2m1 0v3m1 0v2m1 0v2m1 0v3m1 0v2m1 0v2m1 0v3m1 0v2m1 0v2m1 0v3m1 0v2m1 0v2m1 0v3m1 0v2m1 0v2m1 0v3m1 0v2m1 0v2m1 0v3m1 0v2m1 0v2m1 0v3m1 0v2m1 0v2m1 0v3m1 0v2m1 0v2m1 0v6m-1 0v8m-1 0v9m-1 0v9m-1 0v8m-1 0v9m-1 0v8m-1 0v9m-1 0v8m-1 0v9m-1 0v9m-1 0v8m-1 0v5m-1.5 0.5h1m-1.5 0.5v2m-1.5 0.5h1m-2 1h1m-2 1h1m-2 1h1m-1.5 0.5v2m-1.5 0.5h1m-2 1h1m-2 1h1m-2 1h1m-1.5 0.5v2m-1.5 0.5h1m-2 1h1m-2 1h1m-1.5 0.5v2m-1.5 0.5h1m-2 1h1m-2 1h1m-2 1h1m-1.5 0.5v2m-1.5 0.5h1m-2 1h1m-2 1h1m-1.5 0.5v2m-1.5 0.5h1m-2 1h1m-2 1h1m-2 1h1m-1.5 0.5v2m-1.5 0.5h1m-2 1h1m-2 1h1m-2 1h1m-1.5 0.5v2m-1.5 0.5h1m-2 1h1m-2 1h1m-1.5 0.5v2m-1.5 0.5h1m-2 1h1m-2 1h1m-2 1h1m-1.5 0.5v2m-1.5 0.5h1m-2 1h1m-2 1h1m-1.5 0.5v2m-1.5 0.5h1m-2 1h1m-2 1h1m-2 1h1m-1.5 0.5v2m-1.5 0.5h1m-2 1h1m-2 1h1m-2 1h1m-1.5 0.5v2m-1.5 0.5h1m-1.5 0.5v3m1 0v4m1 0v5m1 0v5m1 0v4m1 0v5m1 0v4m1 0v5m1 0v4m1 0v5m1 0v5m1 0v4m1 0v6m1 0v8m1 0v7m1 0v7m1 0v8m1 0v7m1 0v4m1 0v2m0.5 0.5h1m0.5 0.5v2m0.5 0.5h1m0.5 0.5v2m0.5 0.5h1m0.5 0.5v2m0.5 0.5h1m0.5 0.5v2m0.5 0.5h1m0.5 0.5v2m0.5 0.5h1m0.5 0.5v2m0.5 0.5h1m0.5 0.5v2m0.5 0.5h1m0.5 0.5v2m0.5 0.5h1m0.5 0.5v2m0.5 0.5h1m0.5 0.5v2m0.5 0.5h1m0.5 0.5v2m0.5 0.5h1m0.5 0.5v2m1 0v2m1 0v2m0.5 0.5h1m0.5 0.5v2m1 0v2m0.5 0.5h1m0.5 0.5v2m1 0v2m1 0v2m0.5 0.5h1m0.5 0.5v2m1 0v2m0.5 0.5h1m0.5 0.5v2m1 0v2m1 0v2m1 0v3m-1 0v4m-1 0v4m-1 0v5m-1 0v4m-1 0v4m-1 0v3m-1 0v2m-1.5 0.5h1m-2 1h1m-1.5 0.5v2m-1.5 0.5h1m-2 1h1m-1.5 0.5v2m-1.5 0.5h1m-2 1h1m-1.5 0.5v2m-1.5 0.5h1m-2 1h1m-1.5 0.5v2m-1.5 0.5h1m-2 1h1m-1.5 0.5v2m-1.5 0.5h1m-1.5 0.5v22m1 0v3m1 0v3m1 0v3m1 0v3m1 0v3m1 0v3m1 0v3m1 0v3m1 0v2m1 0v3m1 0v3m1 0v2m-2.5 0.5h2m-3 1h1m-3 1h2m-2.5 0.5v2m-1 0v2m-1 0v2m-1 0v3m-1 0v2m-1 0v2m-1 0v3m-1 0v2m-1 0v2m-1 0v2m-1 0v2m-1 0v2m-1 0v2m-1.5-0.5h1m-5 1h4m-7 1h3m-6 1h3m-7 1h4m-7 1h3m-6 1h3m-7 1h4m-7 1h3m-5 1h2m-4 1h2m-3 1h1m-3 1h2m-3 1h1m-3 1h2m-3 1h1m-3 1h2m-4 1h2m-4 1h2m-5 1h3m-6 1h3m-5 1h2m-5 1h3m-5 1h2m-4 1h2m-4 1h2m-4 1h2m-4 1h2m-3 1h1m-3 1h2m-4 1h2m-4 1h2m-5 1h3m-5 1h2" stroke="#00ff00" fill="none"/>
<path d="M118 50.5h5M120.5 48v5" stroke="#fff" fill="none"/>
<path d="M137 218.5h5M139.5 216v5" stroke="#fff" fill="none"/>
<path d="M128 321.5h5M130.5 319v5" stroke="#fff" fill="none"/>
<path d="M137 394.5h5M139.5 392v5" stroke="#fff" fill="none"/>
<path d="M105 449.5h5M107.5 447v5" stroke="#fff" fill="none"/>
<path d="M111 493.5h5M113.5 491v5" stroke="#fff" fill="none"/>
<path d="M122 529.5h5M124.5 527v5" stroke="#fff" fill="none"/>
<path d="M121 560.5h5M123.5 558v5" stroke="#fff" fill="none"/>
<path d="M108 586.5h5M110.5 584v5" stroke="#fff" fill="none"/>
<path d="M96 610.5h5M98.5 608v5" stroke="#fff" fill="none"/>
<path d="M121 630.5h5M123.5 628v5" stroke="#fff" fill="none"/>
<path d="M133 648.5h5M135.5 646v5" stroke="#fff" fill="none"/>
<path d="M136 665.5h5M138.5 663v5" stroke="#fff" fill="none"/>
<path d="M132 669.5h5M134.5 667v5" stroke="#fff" fill="none"/>
<path d="M121 683.5h5M123.5 681v5" stroke="#fff" fill="none"/>
<path d="M106 696.5h5M108.5 694v5" stroke="#fff" fill="none"/>
<path d="M91 705.5h5M93.5 703v5" stroke="#fff" fill="none"/>
<path d="M99 713.5h5M101.5 711v5" stroke="#fff" fill="none"/>
<path d="M118 720.5h5M120.5 718v5" stroke="#fff" fill="none"/>
<path d="M129 727.5h5M131.5 725v5" stroke="#fff" fill="none"/>
<path d="M136 729.5h5M138.5 727v5" stroke="#fff" fill="none"/>
<path d="M120.5 50v5m1 0v9m1 0v9m1 0v8m1 0v9m1 0v9m1 0v9m1 0v9m1 0v9m1 0v9m1 0v8m1 0v9m1 0v9m1 0v9m1 0v9m1 0v9m1 0v8m1 0v9m1 0v9m1 0v10m-1 0v12m-1 0v11m-1 0v12m-1 0v11m-1 0v11m-1 0v12m-1 0v11m-1 0v12m-1 0v10m1 0v8m1 0v8m1 0v8m1 0v8m1 0v8m1 0v8m1 0v8m1 0v8m1 0v5m-1 0v2m-1 0v2m-1 0v2m-1.5 0.5h1m-1.5 0.5v2m-1 0v2m-1.5 0.5h1m-1.5 0.5v2m-1 0v2m-1 0v2m-1.5 0.5h1m-1.5 0.5v2m-1 0v2m-1.5 0.5h1m-1.5 0.5v2m-1 0v2m-1 0v2m-1.5 0.5h1m-1.5 0.5v2m-1 0v2m-1.5 0.5h1m-1.5 0.5v2m-1 0v2m-1 0v2m-1.5 0.5h1m-1.5 0.5v2m-1 0v2m-1.5 0.5h1m-1.5 0.5v2m-1 0v2m-1 0v2m-1 0v4m1 0v8m1 0v7m1 0v7m1 0v8m1 0v7m1 0v5m1 0v3m1 0v4m1 0v3m1 0v3m1 0v4m1 0v3m1 0v3m1 0v3m1 0v4m1 0v3m1 0v17m-1 0v17m-1 0v2m-1 0v2m-1 0v2m-1 0v2m-1 0v2m-1 0v2m-1 0v2m-1 0v2m-1 0v2m-1 0v2m-1 0v2m-1 0v2m-1 0v2m-1 0v2m-1 0v2m-1 0v2m-1 0v2m-1 0v2m-1 0v2m-1 0v2m-1 0v2m-1 0v2m-1 0v2m-1 0v2m-1.5 0.5h1m0 1h1m0 1h2m0 1h1m0 1h1m0 1h1m0 1h2m0 1h1m0 1h1m0 1h1m0 1h2m0 1h1m0 1h1m0 1h1m0 1h2m0 1h1m0 1h1m0 1h1m0 1h2m0 1h1m0 1h1m0.5 0.5v2m0.5 0.5h1m0.5 0.5v2m0.5 0.5h1m0.5 0.5v2m0.5 0.5h1m0.5 0.5v2m0.5 0.5h1m0.5 0.5v2m0.5 0.5h1m0.5 0.5v2m1 0v3m1 0v6m1 0v6m1 0v3m-1.5 0.5h1m-2 1h1m-2 1h1m-2 1h1m-2 1h1m-1.5 0.5v2m-1.5 0.5h1m-2 1h1m-1.5 0.5v2m-1.5 0.5h1m-2 1h1m-2 1h1m-1.5 0.5v2m-1.5 0.5h1m-2 1h1m-2 1h1m-2 1h1m-3 1h2m-3 1h1m-2 1h1m-2 1h1m-2 1h1m-2 1h1m-2 1h1m-3 1h2m-3 1h1m-2 1h1m-2 1h1m-3 1h2m-4 1h2m-3 1h1m-3 1h2m-4 1h2m-3 1h1m-3 1h2m-4 1h2m-3 1h1m0 1h1m0 1h1m0 1h1m0 1h1m0 1h1m0 1h1m0 1h1m0 1h2m0 1h3m0 1h2m0 1h3m0 1h3m0 1h2m0 1h3m0 1h2m0 1h2m0 1h1m0 1h2m0 1h2m0 1h1m0 1h2m0 1h2m0 1h4m0 1h2" stroke="#ff0080" fill="none"/>
<path d="M81 665.5h5M83.5 663v5" stroke="#fff" fill="none"/>
<path d="M69 683.5h5M71.5 681v5" stroke="#fff" fill="none"/>
<path d="M85 696.5h5M87.5 694v5" stroke="#fff" fill="none"/>
<path d="M98 705.5h5M100.5 703v5" stroke="#fff" fill="none"/>
<path d="M98 713.5h5M100.5 711v5" stroke="#fff" fill="none"/>
<path d="M96 720.5h5M98.5 718v5" stroke="#fff" fill="none"/>
<path d="M101 727.5h5M103.5 725v5" stroke="#fff" fill="none"/>
<path d="M102 729.5h5M104.5 727v5" stroke="#fff" fill="none"/>
<path d="M62 649.5h1m0 1h1m0 1h2m0 1h1m0 1h1m0 1h2m0 1h1m0 1h1m0 1h2m0 1h1m0 1h1m0 1h2m0 1h1m0 1h1m0 1h2m0 1h1m-3 1h4m-11 1h7m-14 1h7m-11 1h4m-2.5 0.5v2m1 0v2m0.5 0.5h1m0.5 0.5v2m1 0v2m0.5 0.5h1m0.5 0.5v2m1 0v2m0.5 0.5h1m0 1h1m0 1h2m0 1h1m0 1h1m0 1h1m0 1h2m0 1h1m0 1h1m0 1h1m0 1h1m0 1h2m0 1h1m0 1h1m0 1h2m0 1h1m0 1h2m0 1h1m0 1h1m0 1h2m0 1h1m0 1h2m0.5 0.5v10m-1 0v4m-1 0v2m1 0v2m0.5 0.5h1m0 1h1m0.5 0.5v2m1 0v2m0.5 0.5h1" stroke="#e07000" fill="none"/>
<path d="M92 669.5h5M94.5 667v5" stroke="#fff" fill="none"/>
<path d="M90 683.5h5M92.5 681v5" stroke="#fff" fill="none"/>
<path d="M86 696.5h5M88.5 694v5" stroke="#fff" fill="none"/>
<path d="M97 705.5h5M99.5 703v5" stroke="#fff" fill="none"/>
<path d="M129 713.5h5M131.5 711v5" stroke="#fff" fill="none"/>
<path d="M175 720.5h5M177.5 718v5" stroke="#fff" fill="none"/>
<path d="M218 727.5h5M220.5 725v5" stroke="#fff" fill="none"/>
<path d="M243 729.5h5M245.5 727v5" stroke="#fff" fill="none"/>
<path d="M62.5 657v9m0.5-0.5h4m0 1h8m0 1h8m0 1h8m0 1h4m-0.5 0.5v3m-1 0v7m-1 0v5m-1 0v3m-1 0v4m-1 0v3m-1 0v2m0.5 0.5h1m0 1h2m0 1h1m0 1h1m0 1h1m0 1h1m0 1h2m0 1h1m0 1h3m0 1h4m0 1h4m0 1h4m0 1h4m0 1h4m0 1h4m0 1h4m0 1h5m0 1h6m0 1h7m0 1h7m0 1h6m0 1h7m0 1h6m0 1h7m0 1h6m0 1h6m0 1h6m0 1h6m0 1h6m0 1h6m0 1h10m0 1h12m0 1h7" stroke="#ffff00" fill="none"/>
<path d="M209 729.5h5M211.5 727v5" stroke="#fff" fill="none"/>
<path d="M209 727.5h5M211.5 725v5" stroke="#fff" fill="none"/>
<path d="M213 720.5h5M215.5 718v5" stroke="#fff" fill="none"/>
<path d="M217 713.5h5M219.5 711v5" stroke="#fff" fill="none"/>
<path d="M232 696.5h5M234.5 694v5" stroke="#fff" fill="none"/>
<path d="M232 683.5h5M234.5 681v5" stroke="#fff" fill="none"/>
<path d="M232 669.5h5M234.5 667v5" stroke="#fff" fill="none"/>
<path d="M235 665.5h5M237.5 663v5" stroke="#fff" fill="none"/>
<path d="M211.5 727v3m1-5v2m1-4v2m1-4v2m0.5-2.5h1m0.5-2.5v2m1-4v2m1-4v2m1-4v2m1-5v3m1-5v2m1-4v2m0.5-2.5h2m0-1h1m0-1h1m0-1h2m0-1h1m0-1h1m0-1h2m0-1h1m0.5-28.5v28m1-30v2m0.5-2.5h1m0.5-3.5v3m-1-7v4m-1-8v4m-1-7v3" stroke="#c8c000" fill="none"/>
<rect x="219" y="702" width="7" height="7" fill="#c8c000"/>
<text x="222.5" y="708.5" font-size="8" font-weight="bold" text-anchor="middle" fill="#404000">1</text>
<rect x="231" y="677" width="7" height="7" fill="#c8c000"/>
<text x="234.5" y="683.5" font-size="8" font-weight="bold" text-anchor="middle" fill="#404000">2</text>
<rect x="231" y="649" width="7" height="7" fill="#c8c000"/>
<text x="234.5" y="655.5" font-size="8" font-weight="bold" text-anchor="middle" fill="#404000">3</text>
<rect x="61" y="705" width="564" height="1" fill="#ff00ff"/>
<rect x="67.5" y="607.5" width="43" height="17" fill="#000" stroke="#ffff00"/>
<text x="71" y="620.6" fill="#ffff00">CAPE</text>
<rect x="67.5" y="636.5" width="57" height="17" fill="#000" stroke="#e07000"/>
<text x="71" y="649.6" fill="#e07000" textLength="50" font-size="13.6" lengthAdjust="spacingAndGlyphs">CINH * 5</text>
<rect x="625.5" y="696.5" width="30" height="17" fill="#000" stroke="#ff00ff"/>
<text x="629" y="709.8" fill="#ff00ff" textLength="22.4" font-size="13.6" lengthAdjust="spacingAndGlyphs">LCL</text>
</g>
<rect x="61" y="50" width="601" height="1" fill="#fff"/>
<rect x="61" y="749" width="601" height="1" fill="#fff"/>
<rect x="61" y="50" width="1" height="700" fill="#fff"/>
<rect x="661" y="50" width="1" height="700" fill="#fff"/>
<rect x="61" y="705" width="1" height="1" fill="#ff00ff"/>
<text x="52.5" y="55" class="al" text-anchor="end" textLength="21" font-size="14" lengthAdjust="spacingAndGlyphs">100</text>
<rect x="56" y="50" width="6" height="1" fill="#fff"/>
<rect x="661" y="50" width="6" height="1" fill="#fff"/>
<text x="670" y="55" class="al" textLength="46" font-size="14" lengthAdjust="spacingAndGlyphs">16614m</text>
<text x="52.5" y="326" class="al" text-anchor="end" textLength="21" font-size="14" lengthAdjust="spacingAndGlyphs">200</text>
<rect x="56" y="321" width="6" height="1" fill="#fff"/>
<rect x="661" y="321" width="6" height="1" fill="#fff"/>
<text x="670" y="326" class="al" textLength="46" font-size="14" lengthAdjust="spacingAndGlyphs">12153m</text>
<text x="52.5" y="454" class="al" text-anchor="end" textLength="21" font-size="14" lengthAdjust="spacingAndGlyphs">300</text>
<rect x="56" y="449" width="6" height="1" fill="#fff"/>
<rect x="661" y="449" width="6" height="1" fill="#fff"/>
<text x="670" y="454" class="al" textLength="39" font-size="14" lengthAdjust="spacingAndGlyphs">9500m</text>
<text x="52.5" y="534" class="al" text-anchor="end" textLength="21" font-size="14" lengthAdjust="spacingAndGlyphs">400</text>
<rect x="56" y="529" width="6" height="1" fill="#fff"/>
<rect x="661" y="529" width="6" height="1" fill="#fff"/>
<text x="670" y="534" class="al" textLength="39" font-size="14" lengthAdjust="spacingAndGlyphs">7460m</text>
<text x="52.5" y="591" class="al" text-anchor="end" textLength="21" font-size="14" lengthAdjust="spacingAndGlyphs">500</text>
<rect x="56" y="586" width="6" height="1" fill="#fff"/>
<rect x="661" y="586" width="6" height="1" fill="#fff"/>
<text x="670" y="591" class="al" textLength="39" font-size="14" lengthAdjust="spacingAndGlyphs">5788m</text>
<text x="52.5" y="635" class="al" text-anchor="end" textLength="21" font-size="14" lengthAdjust="spacingAndGlyphs">600</text>
<rect x="56" y="630" width="6" height="1" fill="#fff"/>
<rect x="661" y="630" width="6" height="1" fill="#fff"/>
<text x="670" y="635" class="al" textLength="39" font-size="14" lengthAdjust="spacingAndGlyphs">4371m</text>
<text x="52.5" y="670" class="al" text-anchor="end" textLength="21" font-size="14" lengthAdjust="spacingAndGlyphs">700</text>
<rect x="56" y="665" width="6" height="1" fill="#fff"/>
<rect x="661" y="665" width="6" height="1" fill="#fff"/>
<text x="670" y="670" class="al" textLength="39" font-size="14" lengthAdjust="spacingAndGlyphs">3136m</text>
<text x="52.5" y="699" class="al" text-anchor="end" textLength="21" font-size="14" lengthAdjust="spacingAndGlyphs">800</text>
<rect x="56" y="694" width="6" height="1" fill="#fff"/>
<rect x="661" y="694" width="6" height="1" fill="#fff"/>
<text x="670" y="699" class="al" textLength="39" font-size="14" lengthAdjust="spacingAndGlyphs">2059m</text>
<text x="52.5" y="724" class="al" text-anchor="end" textLength="21" font-size="14" lengthAdjust="spacingAndGlyphs">900</text>
<rect x="56" y="719" width="6" height="1" fill="#fff"/>
<rect x="661" y="719" width="6" height="1" fill="#fff"/>
<text x="670" y="724" class="al" textLength="39" font-size="14" lengthAdjust="spacingAndGlyphs">1052m</text>
<text x="52.5" y="745" class="al" text-anchor="end" textLength="28" font-size="14" lengthAdjust="spacingAndGlyphs">1000</text>
<rect x="56" y="740" width="6" height="1" fill="#fff"/>
<text x="62" y="29" font-size="16" font-weight="bold" textLength="144.4">Station: Neuchâtel</text>
<text x="231" y="29" font-size="16" font-weight="bold" textLength="129">Date: 26.06.2020</text>
<text x="382" y="29" font-size="16" font-weight="bold">Time: 1400Z</text>
<rect x="61" y="750" width="1" height="5" fill="#fff"/>
<text x="59.5" y="768" class="al" text-anchor="middle" textLength="18" font-size="14" lengthAdjust="spacingAndGlyphs">-50</text>
<rect x="61" y="788" width="1" height="5" fill="#fff"/>
<text x="61.5" y="805.5" class="al" text-anchor="middle" textLength="7" font-size="14" lengthAdjust="spacingAndGlyphs">0</text>
<rect x="61" y="826" width="1" height="5" fill="#fff"/>
<text x="61.5" y="842.5" class="al" text-anchor="middle" textLength="7" font-size="14" lengthAdjust="spacingAndGlyphs">0</text>
<rect x="121" y="750" width="1" height="5" fill="#fff"/>
<text x="119.5" y="768" class="al" text-anchor="middle" textLength="18" font-size="14" lengthAdjust="spacingAndGlyphs">-40</text>
<rect x="121" y="788" width="1" height="5" fill="#fff"/>
<text x="121.5" y="805.5" class="al" text-anchor="middle" textLength="14" font-size="14" lengthAdjust="spacingAndGlyphs">10</text>
<rect x="121" y="826" width="1" height="5" fill="#fff"/>
<text x="121.5" y="842.5" class="al" text-anchor="middle" textLength="21" font-size="14" lengthAdjust="spacingAndGlyphs">300</text>
<rect x="181" y="750" width="1" height="5" fill="#fff"/>
<text x="179.5" y="768" class="al" text-anchor="middle" textLength="18" font-size="14" lengthAdjust="spacingAndGlyphs">-30</text>
<rect x="181" y="788" width="1" height="5" fill="#fff"/>
<text x="181.5" y="805.5" class="al" text-anchor="middle" textLength="14" font-size="14" lengthAdjust="spacingAndGlyphs">20</text>
<rect x="181" y="826" width="1" height="5" fill="#fff"/>
<text x="181.5" y="842.5" class="al" text-anchor="middle" textLength="21" font-size="14" lengthAdjust="spacingAndGlyphs">600</text>
<rect x="241" y="750" width="1" height="5" fill="#fff"/>
<text x="239.5" y="768" class="al" text-anchor="middle" textLength="18" font-size="14" lengthAdjust="spacingAndGlyphs">-20</text>
<rect x="241" y="788" width="1" height="5" fill="#fff"/>
<text x="241.5" y="805.5" class="al" text-anchor="middle" textLength="14" font-size="14" lengthAdjust="spacingAndGlyphs">30</text>
<rect x="241" y="826" width="1" height="5" fill="#fff"/>
<text x="241.5" y="842.5" class="al" text-anchor="middle" textLength="21" font-size="14" lengthAdjust="spacingAndGlyphs">900</text>
<rect x="301" y="750" width="1" height="5" fill="#fff"/>
<text x="299.5" y="768" class="al" text-anchor="middle" textLength="18" font-size="14" lengthAdjust="spacingAndGlyphs">-10</text>
<rect x="301" y="788" width="1" height="5" fill="#fff"/>
<text x="301.5" y="805.5" class="al" text-anchor="middle" textLength="14" font-size="14" lengthAdjust="spacingAndGlyphs">40</text>
<rect x="301" y="826" width="1" height="5" fill="#fff"/>
<text x="301.5" y="842.5" class="al" text-anchor="middle" textLength="28" font-size="14" lengthAdjust="spacingAndGlyphs">1200</text>
<rect x="361" y="750" width="1" height="5" fill="#fff"/>
<text x="361.5" y="768" class="al" text-anchor="middle" textLength="7" font-size="14" lengthAdjust="spacingAndGlyphs">0</text>
<rect x="361" y="788" width="1" height="5" fill="#fff"/>
<text x="361.5" y="805.5" class="al" text-anchor="middle" textLength="14" font-size="14" lengthAdjust="spacingAndGlyphs">50</text>
<rect x="361" y="826" width="1" height="5" fill="#fff"/>
<text x="361.5" y="842.5" class="al" text-anchor="middle" textLength="28" font-size="14" lengthAdjust="spacingAndGlyphs">1500</text>
<rect x="421" y="750" width="1" height="5" fill="#fff"/>
<text x="421.5" y="768" class="al" text-anchor="middle" textLength="14" font-size="14" lengthAdjust="spacingAndGlyphs">10</text>
<rect x="421" y="788" width="1" height="5" fill="#fff"/>
<text x="421.5" y="805.5" class="al" text-anchor="middle" textLength="14" font-size="14" lengthAdjust="spacingAndGlyphs">60</text>
<rect x="421" y="826" width="1" height="5" fill="#fff"/>
<text x="421.5" y="842.5" class="al" text-anchor="middle" textLength="28" font-size="14" lengthAdjust="spacingAndGlyphs">1800</text>
<rect x="481" y="750" width="1" height="5" fill="#fff"/>
<text x="481.5" y="768" class="al" text-anchor="middle" textLength="14" font-size="14" lengthAdjust="spacingAndGlyphs">20</text>
<rect x="481" y="788" width="1" height="5" fill="#fff"/>
<text x="481.5" y="805.5" class="al" text-anchor="middle" textLength="14" font-size="14" lengthAdjust="spacingAndGlyphs">70</text>
<rect x="481" y="826" width="1" height="5" fill="#fff"/>
<text x="481.5" y="842.5" class="al" text-anchor="middle" textLength="28" font-size="14" lengthAdjust="spacingAndGlyphs">2100</text>
<rect x="541" y="750" width="1" height="5" fill="#fff"/>
<text x="541.5" y="768" class="al" text-anchor="middle" textLength="14" font-size="14" lengthAdjust="spacingAndGlyphs">30</text>
<rect x="541" y="788" width="1" height="5" fill="#fff"/>
<text x="541.5" y="805.5" class="al" text-anchor="middle" textLength="14" font-size="14" lengthAdjust="spacingAndGlyphs">80</text>
<rect x="541" y="826" width="1" height="5" fill="#fff"/>
<text x="541.5" y="842.5" class="al" text-anchor="middle" textLength="28" font-size="14" lengthAdjust="spacingAndGlyphs">2400</text>
<rect x="601" y="750" width="1" height="5" fill="#fff"/>
<text x="601.5" y="768" class="al" text-anchor="middle" textLength="14" font-size="14" lengthAdjust="spacingAndGlyphs">40</text>
<rect x="601" y="788" width="1" height="5" fill="#fff"/>
<text x="601.5" y="805.5" class="al" text-anchor="middle" textLength="14" font-size="14" lengthAdjust="spacingAndGlyphs">90</text>
<rect x="601" y="826" width="1" height="5" fill="#fff"/>
<text x="601.5" y="842.5" class="al" text-anchor="middle" textLength="28" font-size="14" lengthAdjust="spacingAndGlyphs">2700</text>
<rect x="661" y="750" width="1" height="5" fill="#fff"/>
<text x="661.5" y="768" class="al" text-anchor="middle" textLength="14" font-size="14" lengthAdjust="spacingAndGlyphs">50</text>
<rect x="661" y="788" width="1" height="5" fill="#fff"/>
<text x="661.5" y="805.5" class="al" text-anchor="middle" textLength="21" font-size="14" lengthAdjust="spacingAndGlyphs">100</text>
<rect x="661" y="826" width="1" height="5" fill="#fff"/>
<text x="661.5" y="842.5" class="al" text-anchor="middle" textLength="28" font-size="14" lengthAdjust="spacingAndGlyphs">3000</text>
<rect x="61" y="863" width="1" height="5" fill="#fff"/>
<text x="59.5" y="879.5" class="al" text-anchor="middle" textLength="25" font-size="14" lengthAdjust="spacingAndGlyphs">-100</text>
<rect x="136" y="863" width="1" height="5" fill="#fff"/>
<text x="134.5" y="879.5" class="al" text-anchor="middle" textLength="18" font-size="14" lengthAdjust="spacingAndGlyphs">-50</text>
<rect x="211" y="863" width="1" height="5" fill="#fff"/>
<text x="211.5" y="879.5" class="al" text-anchor="middle" textLength="7" font-size="14" lengthAdjust="spacingAndGlyphs">0</text>
<rect x="286" y="863" width="1" height="5" fill="#fff"/>
<text x="286.5" y="879.5" class="al" text-anchor="middle" textLength="14" font-size="14" lengthAdjust="spacingAndGlyphs">50</text>
<rect x="361" y="863" width="1" height="5" fill="#fff"/>
<text x="361.5" y="879.5" class="al" text-anchor="middle" textLength="21" font-size="14" lengthAdjust="spacingAndGlyphs">100</text>
<rect x="436" y="863" width="1" height="5" fill="#fff"/>
<text x="436.5" y="879.5" class="al" text-anchor="middle" textLength="21" font-size="14" lengthAdjust="spacingAndGlyphs">150</text>
<rect x="511" y="863" width="1" height="5" fill="#fff"/>
<text x="511.5" y="879.5" class="al" text-anchor="middle" textLength="21" font-size="14" lengthAdjust="spacingAndGlyphs">200</text>
<rect x="586" y="863" width="1" height="5" fill="#fff"/>
<text x="586.5" y="879.5" class="al" text-anchor="middle" textLength="21" font-size="14" lengthAdjust="spacingAndGlyphs">250</text>
<rect x="661" y="863" width="1" height="5" fill="#fff"/>
<text x="661.5" y="879.5" class="al" text-anchor="middle" textLength="21" font-size="14" lengthAdjust="spacingAndGlyphs">300</text>
<text x="361.5" y="781" class="al" text-anchor="middle" textLength="173" font-size="14" lengthAdjust="spacingAndGlyphs">Temperature, Dewpoint  [ °C ]</text>
<text x="360.5" y="819" class="al" text-anchor="middle" textLength="107.5" font-size="14" lengthAdjust="spacingAndGlyphs">Windspeed  [ knt ]</text>
<text x="361.2" y="857" class="al" text-anchor="middle" textLength="137.5" font-size="14" lengthAdjust="spacingAndGlyphs">CAPE, CINH * 5  [ J/kg ]</text>
<text x="361.6" y="893" class="al" text-anchor="middle" textLength="205" font-size="14" lengthAdjust="spacingAndGlyphs">Storm Relative Helicity  [ m^2/s^2 ]</text>
<text x="894" y="40" textLength="60.1" font-size="13.6" lengthAdjust="spacingAndGlyphs">Parameter</text>
<rect x="894" y="41" width="60" height="1" fill="#fff"/>
<text x="1124" y="40" text-anchor="end" textLength="59.7" font-size="13.6" lengthAdjust="spacingAndGlyphs">Value LCL</text>
<rect x="1064" y="41" width="60" height="1" fill="#fff"/>
<text x="1214" y="40" text-anchor="end" textLength="61.9" font-size="13.6" lengthAdjust="spacingAndGlyphs">Value CCL</text>
<rect x="1152" y="41" width="62" height="1" fill="#fff"/>
<text x="1230" y="40" textLength="23.1" font-size="13.6" lengthAdjust="spacingAndGlyphs">Unit</text>
<rect x="1230" y="41" width="23" height="1" fill="#fff"/>
<text x="894" y="104" textLength="259.1" font-size="13.6" lengthAdjust="spacingAndGlyphs">Parcels: Using 50mB mean layer LCL + CCL</text>
<rect x="894" y="105" width="259" height="1" fill="#fff"/>
<text x="894" y="356" textLength="106.0" font-size="13.6" lengthAdjust="spacingAndGlyphs">Convective Indices</text>
<rect x="894" y="357" width="106" height="1" fill="#fff"/>
<text x="894" y="605" textLength="100.8" font-size="13.6" lengthAdjust="spacingAndGlyphs">Wind Parameters</text>
<rect x="894" y="606" width="101" height="1" fill="#fff"/>
<text x="894" y="62" textLength="140.3" font-size="13.6" lengthAdjust="spacingAndGlyphs">Convective Temperature:</text>
<text x="1124" y="62" text-anchor="end" fill="#ff0000" textLength="32" font-size="13.6" lengthAdjust="spacingAndGlyphs">25.56</text>
<text x="1230" y="62" textLength="22" font-size="13.6" lengthAdjust="spacingAndGlyphs">[°C]</text>
<text x="894" y="79" textLength="92.0" font-size="13.6" lengthAdjust="spacingAndGlyphs">Snowfall Height:</text>
<text x="1124" y="79" text-anchor="end" fill="#ffffff" textLength="46" font-size="13.6" lengthAdjust="spacingAndGlyphs">3446.47</text>
<text x="1230" y="79" textLength="19" font-size="13.6" lengthAdjust="spacingAndGlyphs">[m]</text>
<text x="894" y="124" textLength="69.3" font-size="13.6" lengthAdjust="spacingAndGlyphs">Lifted Index:</text>
<text x="1124" y="124" text-anchor="end" fill="#ff0000" textLength="29" font-size="13.6" lengthAdjust="spacingAndGlyphs">-3.19</text>
<text x="1214" y="124" text-anchor="end" fill="#ff0000" textLength="29" font-size="13.6" lengthAdjust="spacingAndGlyphs">-4.36</text>
<text x="1230" y="124" textLength="22" font-size="13.6" lengthAdjust="spacingAndGlyphs">[°C]</text>
<text x="894" y="141" textLength="61.3" font-size="13.6" lengthAdjust="spacingAndGlyphs">CAPE ML:</text>
<text x="1124" y="141" text-anchor="end" fill="#ff0000" textLength="39" font-size="13.6" lengthAdjust="spacingAndGlyphs">716.85</text>
<text x="1214" y="141" text-anchor="end" fill="#ff0000" textLength="46" font-size="13.6" lengthAdjust="spacingAndGlyphs">1167.08</text>
<text x="1230" y="141" textLength="32" font-size="13.6" lengthAdjust="spacingAndGlyphs">[J/kg]</text>
<text x="894" y="158" textLength="146.9" font-size="13.6" lengthAdjust="spacingAndGlyphs">CINH | LSI (LCL: 841mB):</text>
<text x="1124" y="158" text-anchor="end" fill="#ff0000" textLength="32" font-size="13.6" lengthAdjust="spacingAndGlyphs">40.81</text>
<text x="1124" y="158">,</text>
<text x="1136" y="158" fill="#ff0000" textLength="25" font-size="13.6" lengthAdjust="spacingAndGlyphs">0.27</text>
<text x="1230" y="158" textLength="62" font-size="13.6" lengthAdjust="spacingAndGlyphs">[J/kg], [°C]</text>
<text x="894" y="175" textLength="69.4" font-size="13.6" lengthAdjust="spacingAndGlyphs">CAPE SFC:</text>
<text x="1124" y="175" text-anchor="end" fill="#ffff00" textLength="39" font-size="13.6" lengthAdjust="spacingAndGlyphs">920.81</text>
<text x="1214" y="175" text-anchor="end" fill="#ff0000" textLength="46" font-size="13.6" lengthAdjust="spacingAndGlyphs">1410.51</text>
<text x="1230" y="175" textLength="32" font-size="13.6" lengthAdjust="spacingAndGlyphs">[J/kg]</text>
<text x="894" y="192" textLength="128.5" font-size="13.6" lengthAdjust="spacingAndGlyphs">CAPE MU | CINH MU:</text>
<text x="1124" y="192" text-anchor="end" fill="#ffff00" textLength="39" font-size="13.6" lengthAdjust="spacingAndGlyphs">920.81</text>
<text x="1124" y="192">,</text>
<text x="1136" y="192" fill="#ff0000" textLength="32" font-size="13.6" lengthAdjust="spacingAndGlyphs">42.98</text>
<text x="1230" y="192" textLength="32" font-size="13.6" lengthAdjust="spacingAndGlyphs">[J/kg]</text>
<text x="894" y="209" textLength="159.6" font-size="13.6" lengthAdjust="spacingAndGlyphs">3km SFC CAPE | IL CAPE:</text>
<text x="1124" y="209" text-anchor="end" fill="#ffff00" textLength="32" font-size="13.6" lengthAdjust="spacingAndGlyphs">54.69</text>
<text x="1124" y="209">,</text>
<text x="1136" y="209" fill="#ff0000" textLength="39" font-size="13.6" lengthAdjust="spacingAndGlyphs">749.39</text>
<text x="1230" y="209" textLength="32" font-size="13.6" lengthAdjust="spacingAndGlyphs">[J/kg]</text>
<text x="894" y="226" textLength="141.9" font-size="13.6" lengthAdjust="spacingAndGlyphs">DCAPE (LFS = 550mB):</text>
<text x="1124" y="226" text-anchor="end" fill="#ffff00" textLength="39" font-size="13.6" lengthAdjust="spacingAndGlyphs">281.37</text>
<text x="1230" y="226" textLength="32" font-size="13.6" lengthAdjust="spacingAndGlyphs">[J/kg]</text>
<text x="894" y="243" textLength="119.4" font-size="13.6" lengthAdjust="spacingAndGlyphs">850-600 Lapse Rate:</text>
<text x="1124" y="243" text-anchor="end" fill="#ffff00" textLength="32" font-size="13.6" lengthAdjust="spacingAndGlyphs">18.45</text>
<text x="1230" y="243" textLength="22" font-size="13.6" lengthAdjust="spacingAndGlyphs">[°C]</text>
<text x="894" y="260" textLength="155.6" font-size="13.6" lengthAdjust="spacingAndGlyphs">FM Hail Size | SHIP | LHP:</text>
<text x="1124" y="260" text-anchor="end" fill="#ffff00" textLength="48" font-size="13.6" lengthAdjust="spacingAndGlyphs">1.9 - 2.5</text>
<text x="1124" y="260">,</text>
<text x="1136" y="260" fill="#00ff00" textLength="25" font-size="13.6" lengthAdjust="spacingAndGlyphs">0.35</text>
<text x="1161" y="260">,</text>
<text x="1173" y="260" fill="#00ff00" textLength="25" font-size="13.6" lengthAdjust="spacingAndGlyphs">0.00</text>
<text x="1230" y="260" textLength="72" font-size="13.6" lengthAdjust="spacingAndGlyphs">[cm], [1], [1]</text>
<text x="894" y="277" textLength="146.7" font-size="13.6" lengthAdjust="spacingAndGlyphs">Estofex Exp. Hail Param:</text>
<text x="1124" y="277" text-anchor="end" fill="#ffff00" textLength="25" font-size="13.6" lengthAdjust="spacingAndGlyphs">2.05</text>
<text x="1230" y="277" textLength="26" font-size="13.6" lengthAdjust="spacingAndGlyphs">[cm]</text>
<text x="894" y="294" textLength="172.8" font-size="13.6" lengthAdjust="spacingAndGlyphs">Max. Hail Size (OLD, MU, IL):</text>
<text x="1124" y="294" text-anchor="end" fill="#ffff00" textLength="25" font-size="13.6" lengthAdjust="spacingAndGlyphs">2.33</text>
<text x="1124" y="294">,</text>
<text x="1136" y="294" fill="#ff0000" textLength="25" font-size="13.6" lengthAdjust="spacingAndGlyphs">3.03</text>
<text x="1161" y="294">,</text>
<text x="1173" y="294" fill="#ff0000" textLength="25" font-size="13.6" lengthAdjust="spacingAndGlyphs">3.16</text>
<text x="1230" y="294" textLength="26" font-size="13.6" lengthAdjust="spacingAndGlyphs">[cm]</text>
<text x="894" y="314" textLength="101.6" font-size="13.6" lengthAdjust="spacingAndGlyphs">LCL / CCL (AGL):</text>
<text x="1124" y="314" text-anchor="end" fill="#ffff00" textLength="46" font-size="13.6" lengthAdjust="spacingAndGlyphs">1021.49</text>
<text x="1214" y="314" text-anchor="end" fill="#ffff00" textLength="46" font-size="13.6" lengthAdjust="spacingAndGlyphs">1319.67</text>
<text x="1230" y="314" textLength="19" font-size="13.6" lengthAdjust="spacingAndGlyphs">[m]</text>
<text x="894" y="331" textLength="105.7" font-size="13.6" lengthAdjust="spacingAndGlyphs">Convective Height:</text>
<text x="1124" y="331" text-anchor="end" fill="#ff0000" textLength="25" font-size="13.6" lengthAdjust="spacingAndGlyphs">9.26</text>
<text x="1214" y="331" text-anchor="end" fill="#ff0000" textLength="25" font-size="13.6" lengthAdjust="spacingAndGlyphs">9.30</text>
<text x="1230" y="331" textLength="26" font-size="13.6" lengthAdjust="spacingAndGlyphs">[km]</text>
<text x="894" y="376" textLength="95.5" font-size="13.6" lengthAdjust="spacingAndGlyphs">Showalter Index:</text>
<text x="1124" y="376" text-anchor="end" fill="#ff0000" textLength="29" font-size="13.6" lengthAdjust="spacingAndGlyphs">-1.49</text>
<text x="1230" y="376" textLength="22" font-size="13.6" lengthAdjust="spacingAndGlyphs">[°C]</text>
<text x="894" y="393" textLength="150.4" font-size="13.6" lengthAdjust="spacingAndGlyphs">Modified Thompson Index:</text>
<text x="1124" y="393" text-anchor="end" fill="#ff0000" textLength="32" font-size="13.6" lengthAdjust="spacingAndGlyphs">46.59</text>
<text x="1230" y="393" textLength="22" font-size="13.6" lengthAdjust="spacingAndGlyphs">[°C]</text>
<text x="894" y="410" textLength="105.7" font-size="13.6" lengthAdjust="spacingAndGlyphs">Total Totals Index:</text>
<text x="1124" y="410" text-anchor="end" fill="#ff0000" textLength="32" font-size="13.6" lengthAdjust="spacingAndGlyphs">50.84</text>
<text x="1230" y="410" textLength="22" font-size="13.6" lengthAdjust="spacingAndGlyphs">[°C]</text>
<text x="894" y="427" textLength="57.4" font-size="13.6" lengthAdjust="spacingAndGlyphs">KO Index:</text>
<text x="1124" y="427" text-anchor="end" fill="#ff0000" textLength="36" font-size="13.6" lengthAdjust="spacingAndGlyphs">-11.01</text>
<text x="1230" y="427" textLength="15" font-size="13.6" lengthAdjust="spacingAndGlyphs">[1]</text>
<text x="894" y="444" textLength="123.7" font-size="13.6" lengthAdjust="spacingAndGlyphs">Craven SigSvr / 1000:</text>
<text x="1124" y="444" text-anchor="end" fill="#ff0000" textLength="25" font-size="13.6" lengthAdjust="spacingAndGlyphs">6.65</text>
<text x="1230" y="444" textLength="54" font-size="13.6" lengthAdjust="spacingAndGlyphs">[m^3/s^3]</text>
<text x="894" y="461" textLength="114.5" font-size="13.6" lengthAdjust="spacingAndGlyphs">SCP RM (new, old):</text>
<text x="1124" y="461" text-anchor="end" fill="#00ff00" textLength="25" font-size="13.6" lengthAdjust="spacingAndGlyphs">0.16</text>
<text x="1124" y="461">,</text>
<text x="1136" y="461" fill="#00ff00" textLength="25" font-size="13.6" lengthAdjust="spacingAndGlyphs">0.05</text>
<text x="1230" y="461" textLength="15" font-size="13.6" lengthAdjust="spacingAndGlyphs">[1]</text>
<text x="894" y="478" textLength="88.4" font-size="13.6" lengthAdjust="spacingAndGlyphs">STP (new, old):</text>
<text x="1124" y="478" text-anchor="end" fill="#00ff00" textLength="25" font-size="13.6" lengthAdjust="spacingAndGlyphs">0.03</text>
<text x="1124" y="478">,</text>
<text x="1136" y="478" fill="#00ff00" textLength="25" font-size="13.6" lengthAdjust="spacingAndGlyphs">0.02</text>
<text x="1230" y="478" textLength="15" font-size="13.6" lengthAdjust="spacingAndGlyphs">[1]</text>
<text x="894" y="495" textLength="135.1" font-size="13.6" lengthAdjust="spacingAndGlyphs">SB STP (fix) | CWASP:</text>
<text x="1124" y="495" text-anchor="end" fill="#00ff00" textLength="25" font-size="13.6" lengthAdjust="spacingAndGlyphs">0.04</text>
<text x="1124" y="495">,</text>
<text x="1136" y="495" fill="#ffff00" textLength="32" font-size="13.6" lengthAdjust="spacingAndGlyphs">50.51</text>
<text x="1230" y="495" textLength="43" font-size="13.6" lengthAdjust="spacingAndGlyphs">[1], [%]</text>
<text x="894" y="512" textLength="112.1" font-size="13.6" lengthAdjust="spacingAndGlyphs">DCP | MMP | MSP:</text>
<text x="1124" y="512" text-anchor="end" fill="#00ff00" textLength="25" font-size="13.6" lengthAdjust="spacingAndGlyphs">0.14</text>
<text x="1124" y="512">,</text>
<text x="1136" y="512" fill="#00ff00" textLength="25" font-size="13.6" lengthAdjust="spacingAndGlyphs">9.70</text>
<text x="1161" y="512">,</text>
<text x="1173" y="512" fill="#00ff00" textLength="32" font-size="13.6" lengthAdjust="spacingAndGlyphs">24.70</text>
<text x="1230" y="512" textLength="71" font-size="13.6" lengthAdjust="spacingAndGlyphs">[1], [%], [%]</text>
<text x="894" y="529" textLength="126.3" font-size="13.6" lengthAdjust="spacingAndGlyphs">MB Comp | SHERBE:</text>
<text x="1124" y="529" text-anchor="end" fill="#00ff00" textLength="25" font-size="13.6" lengthAdjust="spacingAndGlyphs">0.00</text>
<text x="1124" y="529">,</text>
<text x="1136" y="529" fill="#00ff00" textLength="25" font-size="13.6" lengthAdjust="spacingAndGlyphs">0.31</text>
<text x="1230" y="529" textLength="38" font-size="13.6" lengthAdjust="spacingAndGlyphs">[1], [1]</text>
<text x="894" y="546" textLength="145.5" font-size="13.6" lengthAdjust="spacingAndGlyphs">Exp. Supercell Index CH:</text>
<text x="1124" y="546" text-anchor="end" fill="#ff0000" textLength="25" font-size="13.6" lengthAdjust="spacingAndGlyphs">2.04</text>
<text x="1230" y="546" textLength="15" font-size="13.6" lengthAdjust="spacingAndGlyphs">[1]</text>
<text x="894" y="563" textLength="99.2" font-size="13.6" lengthAdjust="spacingAndGlyphs">SWISS 12 Index:</text>
<text x="1124" y="563" text-anchor="end" fill="#ff0000" textLength="29" font-size="13.6" lengthAdjust="spacingAndGlyphs">-8.02</text>
<text x="1230" y="563" textLength="15" font-size="13.6" lengthAdjust="spacingAndGlyphs">[1]</text>
<text x="894" y="580" textLength="110.5" font-size="13.6" lengthAdjust="spacingAndGlyphs">Precipitable Water:</text>
<text x="1124" y="580" text-anchor="end" fill="#ff0000" textLength="32" font-size="13.6" lengthAdjust="spacingAndGlyphs">35.97</text>
<text x="1230" y="580" textLength="30" font-size="13.6" lengthAdjust="spacingAndGlyphs">[mm]</text>
<text x="894" y="625" textLength="143.5" font-size="13.6" lengthAdjust="spacingAndGlyphs">Storm Direction | Motion:</text>
<text x="1124" y="625" text-anchor="end" fill="#ffffff" textLength="39" font-size="13.6" lengthAdjust="spacingAndGlyphs">255.29</text>
<text x="1124" y="625">,</text>
<text x="1136" y="625" fill="#ffff00" textLength="32" font-size="13.6" lengthAdjust="spacingAndGlyphs">18.48</text>
<text x="1230" y="625" textLength="47" font-size="13.6" lengthAdjust="spacingAndGlyphs">[°], [knt]</text>
<text x="894" y="642" textLength="116.6" font-size="13.6" lengthAdjust="spacingAndGlyphs">500m Critical Angle:</text>
<text x="1124" y="642" text-anchor="end" fill="#00ff00" textLength="32" font-size="13.6" lengthAdjust="spacingAndGlyphs">14.40</text>
<text x="1230" y="642" textLength="13" font-size="13.6" lengthAdjust="spacingAndGlyphs">[°]</text>
<text x="894" y="662" textLength="107.3" font-size="13.6" lengthAdjust="spacingAndGlyphs">SR Wind Sfc-2km:</text>
<text x="1124" y="662" text-anchor="end" fill="#00ff00" textLength="25" font-size="13.6" lengthAdjust="spacingAndGlyphs">7.15</text>
<text x="1230" y="662" textLength="26" font-size="13.6" lengthAdjust="spacingAndGlyphs">[knt]</text>
<text x="894" y="679" textLength="113.4" font-size="13.6" lengthAdjust="spacingAndGlyphs">SR Wind 4km-6km:</text>
<text x="1124" y="679" text-anchor="end" fill="#00ff00" textLength="25" font-size="13.6" lengthAdjust="spacingAndGlyphs">7.84</text>
<text x="1230" y="679" textLength="26" font-size="13.6" lengthAdjust="spacingAndGlyphs">[knt]</text>
<text x="894" y="696" textLength="120.5" font-size="13.6" lengthAdjust="spacingAndGlyphs">SR Wind 9km-11km:</text>
<text x="1124" y="696" text-anchor="end" fill="#ff0000" textLength="32" font-size="13.6" lengthAdjust="spacingAndGlyphs">10.62</text>
<text x="1230" y="696" textLength="48" font-size="13.6" lengthAdjust="spacingAndGlyphs">[knt] HP</text>
<text x="894" y="716" textLength="121.5" font-size="13.6" lengthAdjust="spacingAndGlyphs">Effective Shear 6000:</text>
<text x="1124" y="716" text-anchor="end" fill="#00ff00" textLength="32" font-size="13.6" lengthAdjust="spacingAndGlyphs">18.03</text>
<text x="1230" y="716" textLength="26" font-size="13.6" lengthAdjust="spacingAndGlyphs">[knt]</text>
<text x="894" y="736" textLength="147.5" font-size="13.6" lengthAdjust="spacingAndGlyphs">Bulk Richardson Number:</text>
<text x="1124" y="736" text-anchor="end" fill="#ffff00" textLength="32" font-size="13.6" lengthAdjust="spacingAndGlyphs">50.77</text>
<text x="1214" y="736" text-anchor="end" fill="#ffff00" textLength="32" font-size="13.6" lengthAdjust="spacingAndGlyphs">82.66</text>
<text x="1230" y="736" textLength="15" font-size="13.6" lengthAdjust="spacingAndGlyphs">[1]</text>
<text x="894" y="756" textLength="111.6" font-size="13.6" lengthAdjust="spacingAndGlyphs">3km Effective SRH:</text>
<text x="1124" y="756" text-anchor="end" fill="#00ff00" textLength="32" font-size="13.6" lengthAdjust="spacingAndGlyphs">15.10</text>
<text x="1230" y="756" textLength="54" font-size="13.6" lengthAdjust="spacingAndGlyphs">[m^2/s^2]</text>
<text x="894" y="773" textLength="173.3" font-size="13.6" lengthAdjust="spacingAndGlyphs">Max 3km SRH (0-2km) | AGL:</text>
<text x="1124" y="773" text-anchor="end" fill="#00ff00" textLength="32" font-size="13.6" lengthAdjust="spacingAndGlyphs">49.68</text>
<text x="1124" y="773">,</text>
<text x="1136" y="773" fill="#00ff00" textLength="46" font-size="13.6" lengthAdjust="spacingAndGlyphs">2000.00</text>
<text x="1230" y="773" textLength="81" font-size="13.6" lengthAdjust="spacingAndGlyphs">[m^2/s^2], [m]</text>
<text x="894" y="793" textLength="155.6" font-size="13.6" lengthAdjust="spacingAndGlyphs">3km Energy Helicity Index:</text>
<text x="1124" y="793" text-anchor="end" fill="#00ff00" textLength="25" font-size="13.6" lengthAdjust="spacingAndGlyphs">0.07</text>
<text x="1214" y="793" text-anchor="end" fill="#00ff00" textLength="25" font-size="13.6" lengthAdjust="spacingAndGlyphs">0.11</text>
<text x="1230" y="793" textLength="15" font-size="13.6" lengthAdjust="spacingAndGlyphs">[1]</text>
<text x="894" y="810" textLength="140.6" font-size="13.6" lengthAdjust="spacingAndGlyphs">3km Vorticity Gen. Pot.:</text>
<text x="1124" y="810" text-anchor="end" fill="#00ff00" textLength="25" font-size="13.6" lengthAdjust="spacingAndGlyphs">0.07</text>
<text x="1214" y="810" text-anchor="end" fill="#00ff00" textLength="25" font-size="13.6" lengthAdjust="spacingAndGlyphs">0.09</text>
<text x="1230" y="810" textLength="42" font-size="13.6" lengthAdjust="spacingAndGlyphs">[m/s^2]</text>
<rect x="729" y="827" width="15" height="8" fill="#ff0000"/>
<text x="753" y="836" fill="#ff0000" textLength="112.0" font-size="13.6" lengthAdjust="spacingAndGlyphs">Temperature Profile</text>
<rect x="729" y="847" width="15" height="8" fill="#00ffff"/>
<text x="753" y="856" fill="#00ffff" textLength="93.1" font-size="13.6" lengthAdjust="spacingAndGlyphs">Dewpoint Profile</text>
<rect x="729" y="867" width="15" height="8" fill="#00ff00"/>
<text x="753" y="876" fill="#00ff00" textLength="136.8" font-size="13.6" lengthAdjust="spacingAndGlyphs">OBS Windspeed Profile</text>
<rect x="729" y="887" width="15" height="8" fill="#ff0080"/>
<text x="753" y="896" fill="#ff0080" textLength="127.0" font-size="13.6" lengthAdjust="spacingAndGlyphs">SR Windspeed Profile</text>
<rect x="729" y="907" width="15" height="8" fill="#c8c800"/>
<text x="753" y="916" fill="#c8c800" textLength="222.9" font-size="13.6" lengthAdjust="spacingAndGlyphs">Sfc-3km Storm Relative Helicity Profile</text>
<rect x="729" y="927" width="15" height="8" fill="#404000"/>
<text x="753" y="936" fill="#404000" textLength="205.4" font-size="13.6" lengthAdjust="spacingAndGlyphs">Effective Layer (CAPE &gt;= 100 J/kg)</text>
<rect x="1079" y="827" width="15" height="8" fill="#00ff00"/>
<text x="1103" y="836" fill="#00ff00" textLength="183.1" font-size="13.6" lengthAdjust="spacingAndGlyphs">No / Non Severe Thunderstorms</text>
<rect x="1079" y="847" width="15" height="8" fill="#ffff00"/>
<text x="1103" y="856" fill="#ffff00" textLength="211.2" font-size="13.6" lengthAdjust="spacingAndGlyphs">Scattered / Moderate Thunderstorms</text>
<rect x="1079" y="867" width="15" height="8" fill="#ff0000"/>
<text x="1103" y="876" fill="#ff0000" textLength="209.7" font-size="13.6" lengthAdjust="spacingAndGlyphs">Widespread / Severe Thunderstorms</text>
<text x="747.3" y="32" font-size="14.5" font-weight="bold" fill="#00ff00" textLength="27.6" lengthAdjust="spacingAndGlyphs">OBS</text>
<text x="818.5" y="32" font-size="14.5" font-weight="bold" fill="#ff0080" textLength="16.8" lengthAdjust="spacingAndGlyphs">SR</text>
<rect x="761" y="40" width="1" height="730" fill="#00ff00"/>
<rect x="826" y="40" width="1" height="730" fill="#ff0080"/>
<path d="M761 218.5h1m-2 1h1m-3 1h2m-3 1h1m-2 1h1m-2 1h1m-2 1h1m-3 1h2m-3 1h1m-2 1h1m-2 1h1m-3 1h2m-3 1h1m-2 1h1m-2 1h1m-2 1h1m-3 1h2m-3 1h1m-2 1h1" stroke="#fff" fill="none"/>
<path d="M761 321.5h1m-2 1h1m-3 1h2m-3 1h1m-2 1h1m-2 1h1m-2 1h1m-3 1h2m-3 1h1m-2 1h1m-2 1h1m-3 1h2m-3 1h1m-2 1h1m-2 1h1m-2 1h1m-3 1h2m-3 1h1m-2 1h1" stroke="#fff" fill="none"/>
<path d="M761 394.5h1m-1.5 0.5v2m-1 0v2m-1 0v2m-1 0v2m-1 0v2m-1 0v2m-1.5 0.5h1m-1.5 0.5v2m-1 0v2m-1 0v2m-1 0v2m-1 0v2m-1 0v2m-1.5 0.5h1" stroke="#fff" fill="none"/>
<path d="M761 449.5h1m-2 1h1m-3 1h2m-3 1h1m-2 1h1m-2 1h1m-2 1h1m-3 1h2m-3 1h1m-2 1h1m-2 1h1m-3 1h2m-3 1h1m-2 1h1m-2 1h1m-2 1h1m-3 1h2m-3 1h1m-2 1h1" stroke="#fff" fill="none"/>
<path d="M761 493.5h1m-2 1h1m-2 1h1m-3 1h2m-3 1h1m-2 1h1m-2 1h1m-2 1h1m-2 1h1m-3 1h2m-3 1h1m-2 1h1m-2 1h1m-2 1h1m-2 1h1m-2 1h1m-3 1h2m-3 1h1m-2 1h1m-2 1h1" stroke="#fff" fill="none"/>
<path d="M761 529.5h1m-2 1h1m-2 1h1m-3 1h2m-3 1h1m-2 1h1m-2 1h1m-2 1h1m-2 1h1m-3 1h2m-3 1h1m-2 1h1m-2 1h1m-2 1h1m-2 1h1m-2 1h1m-3 1h2m-3 1h1m-2 1h1m-2 1h1" stroke="#fff" fill="none"/>
<path d="M761 560.5h1m-3 1h2m-3 1h1m-2 1h1m-3 1h2m-3 1h1m-3 1h2m-3 1h1m-3 1h2m-3 1h1m-2 1h1m-3 1h2m-3 1h1m-3 1h2m-3 1h1m-2 1h1m-3 1h2m-3 1h1" stroke="#fff" fill="none"/>
<path d="M761 586.5h1m-3 1h2m-4 1h2m-4 1h2m-4 1h2m-3 1h1m-3 1h2m-4 1h2m-4 1h2m-3 1h1m-3 1h2m-4 1h2m-4 1h2m-4 1h2m-3 1h1" stroke="#fff" fill="none"/>
<path d="M761 610.5h1m-3 1h2m-4 1h2m-4 1h2m-4 1h2m-3 1h1m-3 1h2m-4 1h2m-4 1h2m-3 1h1m-3 1h2m-4 1h2m-4 1h2m-4 1h2m-3 1h1" stroke="#fff" fill="none"/>
<path d="M761 630.5h1m-2 1h1m-2 1h1m-2 1h1m-2 1h1m-2 1h1m-2 1h1m-2 1h1m-2 1h1m-2 1h1m-3 1h2m-3 1h1m-2 1h1m-2 1h1m-2 1h1m-2 1h1m-2 1h1m-2 1h1m-2 1h1m-2 1h1m-2 1h1" stroke="#fff" fill="none"/>
<path d="M761 648.5h1m-2 1h1m-2 1h1m-1.5 0.5v2m-1.5 0.5h1m-2 1h1m-2 1h1m-2 1h1m-2 1h1m-1.5 0.5v2m-1.5 0.5h1m-2 1h1m-2 1h1m-2 1h1m-2 1h1m-2 1h1m-1.5 0.5v2m-1.5 0.5h1m-2 1h1m-2 1h1" stroke="#fff" fill="none"/>
<path d="M761 665.5h1m-2 1h1m-2 1h1m-1.5 0.5v2m-1.5 0.5h1m-2 1h1m-2 1h1m-2 1h1m-2 1h1m-1.5 0.5v2m-1.5 0.5h1m-2 1h1m-2 1h1m-2 1h1m-2 1h1m-2 1h1m-1.5 0.5v2m-1.5 0.5h1m-2 1h1m-2 1h1" stroke="#fff" fill="none"/>
<path d="M761 669.5h1m-2 1h1m-2 1h1m-2 1h1m-2 1h1m-1.5 0.5v2m-1.5 0.5h1m-2 1h1m-2 1h1m-2 1h1m-2 1h1m-2 1h1m-2 1h1m-2 1h1m-1.5 0.5v2m-1.5 0.5h1m-2 1h1m-2 1h1m-2 1h1m-2 1h1" stroke="#fff" fill="none"/>
<path d="M761 683.5h1m-2 1h1m-2 1h1m-2 1h1m-2 1h1m-2 1h1m-2 1h1m-2 1h1m-2 1h1m-2 1h1m-3 1h2m-3 1h1m-2 1h1m-2 1h1m-2 1h1m-2 1h1m-2 1h1m-2 1h1m-2 1h1m-2 1h1m-2 1h1" stroke="#fff" fill="none"/>
<path d="M761 696.5h1m-3 1h2m-3 1h1m-2 1h1m-3 1h2m-3 1h1m-2 1h1m-3 1h2m-3 1h1m-2 1h1m-3 1h2m-3 1h1m-2 1h1m-3 1h2m-3 1h1m-2 1h1m-3 1h2m-3 1h1" stroke="#fff" fill="none"/>
<path d="M760 705.5h2m-4 1h2m-4 1h2m-4 1h2m-4 1h2m-4 1h2m-4 1h2m-4 1h2m-4 1h2m-4 1h2m-4 1h2m-4 1h2m-4 1h2m-3 1h1" stroke="#fff" fill="none"/>
<path d="M761 713.5h1m-3 1h2m-4 1h2m-4 1h2m-4 1h2m-3 1h1m-3 1h2m-4 1h2m-4 1h2m-3 1h1m-3 1h2m-4 1h2m-4 1h2m-4 1h2m-3 1h1" stroke="#fff" fill="none"/>
<path d="M761 720.5h1m-3 1h2m-3 1h1m-3 1h2m-3 1h1m-3 1h2m-3 1h1m-3 1h2m-3 1h1m-3 1h2m-3 1h1m-3 1h2m-3 1h1m-3 1h2m-3 1h1m-3 1h2m-3 1h1" stroke="#fff" fill="none"/>
<path d="M761 727.5h1m-2 1h1m-3 1h2m-3 1h1m-2 1h1m-2 1h1m-2 1h1m-3 1h2m-3 1h1m-2 1h1m-2 1h1m-3 1h2m-3 1h1m-2 1h1m-2 1h1m-2 1h1m-3 1h2m-3 1h1m-2 1h1" stroke="#fff" fill="none"/>
<path d="M761 729.5h1m-2 1h1m-2 1h1m-2 1h1m-2 1h1m-2 1h1m-2 1h1m-2 1h1m-2 1h1m-2 1h1m-3 1h2m-3 1h1m-2 1h1m-2 1h1m-2 1h1m-2 1h1m-2 1h1m-2 1h1m-2 1h1m-2 1h1m-2 1h1" stroke="#fff" fill="none"/>
<path d="M826.5 218v3m-1 0v5m-1 0v4m-1 0v5m-1 0v5m-1 0v4m-1 0v3" stroke="#fff" fill="none"/>
<path d="M826.5 321v5m-1 0v10m-1 0v10m-1 0v5" stroke="#fff" fill="none"/>
<path d="M826 394.5h1m0 1h1m0 1h2m0 1h1m0 1h1m0 1h1m0 1h1m0 1h2m0 1h1m0 1h1m0 1h1m0 1h2m0 1h1m0 1h1m0 1h1m0 1h1m0 1h2m0 1h1m0 1h1" stroke="#fff" fill="none"/>
<path d="M826 449.5h1m0.5 0.5v2m0.5 0.5h1m0 1h1m0.5 0.5v2m0.5 0.5h1m0 1h1m0.5 0.5v2m0.5 0.5h1m0 1h1m0.5 0.5v2m0.5 0.5h1m0 1h1m0.5 0.5v2m0.5 0.5h1m0 1h1m0.5 0.5v2m0.5 0.5h1" stroke="#fff" fill="none"/>
<path d="M826 493.5h1m0.5 0.5v2m0.5 0.5h1m0.5 0.5v2m1 0v2m0.5 0.5h1m0.5 0.5v2m0.5 0.5h1m0.5 0.5v2m0.5 0.5h1m0.5 0.5v2m0.5 0.5h1m0.5 0.5v2m1 0v2m0.5 0.5h1m0.5 0.5v2m0.5 0.5h1" stroke="#fff" fill="none"/>
<path d="M826.5 529v3m1 0v6m1 0v6m1 0v6m1 0v6m1 0v3" stroke="#fff" fill="none"/>
<path d="M826.5 560v3m-1 0v5m-1 0v4m-1 0v5m-1 0v5m-1 0v4m-1 0v3" stroke="#fff" fill="none"/>
<path d="M826.5 586v2m-1 0v3m-1 0v2m-1 0v3m-1 0v3m-1 0v2m-1 0v3m-1 0v3m-1 0v2m-1 0v3m-1 0v2" stroke="#fff" fill="none"/>
<path d="M826.5 610v15m-1 0v15" stroke="#fff" fill="none"/>
<path d="M826.5 630v2m1 0v4m1 0v3m1 0v4m1 0v3m1 0v4m1 0v3m1 0v4m1 0v2" stroke="#fff" fill="none"/>
<path d="M826.5 648v2m1 0v4m1 0v3m1 0v4m1 0v3m1 0v4m1 0v3m1 0v4m1 0v2" stroke="#fff" fill="none"/>
<path d="M826.5 665v3m1 0v4m1 0v4m1 0v4m1 0v4m1 0v4m1 0v4m1 0v4m1 0v2" stroke="#fff" fill="none"/>
<path d="M826.5 669v2m1 0v4m1 0v4m1 0v4m1 0v4m1 0v4m1 0v4m1 0v4m1 0v2" stroke="#fff" fill="none"/>
<path d="M826.5 683v2m1 0v4m1 0v3m1 0v4m1 0v3m1 0v4m1 0v3m1 0v4m1 0v2" stroke="#fff" fill="none"/>
<path d="M826.5 696v2m1 0v3m1 0v3m1 0v2m1 0v3m1 0v3m1 0v3m1 0v3m1 0v2m1 0v3m1 0v2" stroke="#fff" fill="none"/>
<path d="M826 705.5h2m0 1h2m0 1h2m0 1h2m0 1h2m0 1h2m0 1h2m0 1h2m0 1h2m0 1h2m0 1h2m0 1h2m0 1h2m0 1h2" stroke="#fff" fill="none"/>
<path d="M826 713.5h2m0 1h3m0 1h3m0 1h3m0 1h3m0 1h2m0 1h3m0 1h3m0 1h3m0 1h3m0 1h2" stroke="#fff" fill="none"/>
<path d="M826 720.5h4m0 1h6m0 1h6m0 1h6m0 1h6m0 1h3" stroke="#fff" fill="none"/>
<path d="M826 727.5h15m0 1h15" stroke="#fff" fill="none"/>
<path d="M826 729.5h30" stroke="#fff" fill="none"/>
</svg>
</body></html>
